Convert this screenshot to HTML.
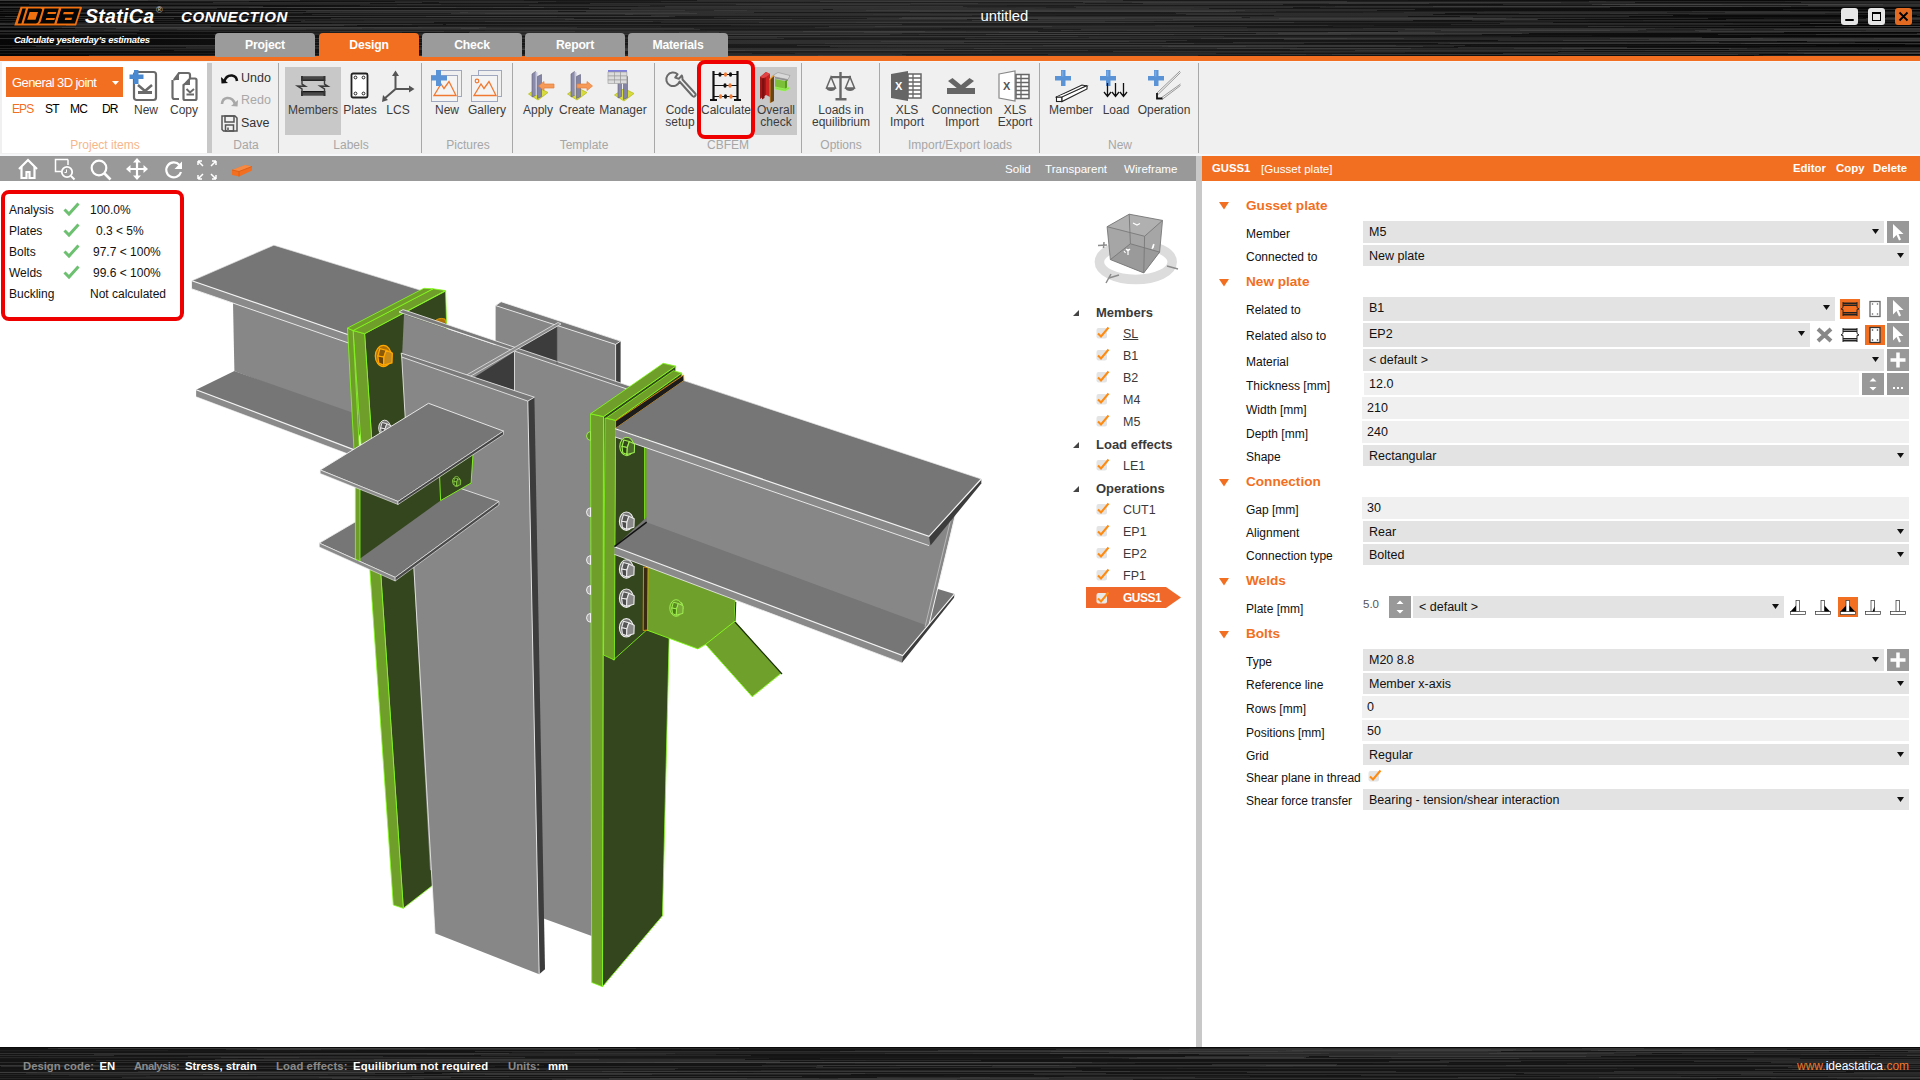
<!DOCTYPE html><html><head><meta charset="utf-8"><style>
*{margin:0;padding:0;box-sizing:border-box}
html,body{width:1920px;height:1080px;overflow:hidden;background:#fff;font-family:"Liberation Sans",sans-serif}
.t{position:absolute;white-space:nowrap;line-height:1}
.a{position:absolute}
svg.a{overflow:visible}
</style></head><body>
<div class="a" style="left:0;top:0;width:1920px;height:56px;background:linear-gradient(90deg,#070707 0%,#141414 20%,#1e1e1e 45%,#1c1c1c 60%,#101010 80%,#060606 100%)"></div>
<svg class="a" style="left:0;top:0" width="1920" height="56"><path d="M1056 15.5h161M1448 42.5h179M1471 45.5h345M601 55.5h365M1165 24.5h449M1115 6.5h663M518 35.5h569M332 23.5h363M1250 36.5h161M1373 21.5h215M1830 33.5h275M1144 22.5h260M812 0.5h596M1381 2.5h599M-125 2.5h578M1701 12.5h638M436 32.5h491M677 34.5h662M524 7.5h237M1752 52.5h382M545 4.5h481M264 15.5h247M1785 1.5h312M1351 52.5h607M435 37.5h135M921 32.5h228M12 47.5h423M1071 23.5h662M1005 44.5h439M3 10.5h544M1394 17.5h171M1782 20.5h608M1070 44.5h370M1211 4.5h150M1399 6.5h676M914 34.5h493M-74 22.5h263M1327 41.5h450M1051 17.5h503M923 50.5h103M1758 39.5h96M586 54.5h408M723 43.5h135M876 7.5h419M992 54.5h340M1462 27.5h122M264 46.5h623M1561 51.5h543M1408 47.5h569M1721 52.5h370M188 18.5h504M1502 17.5h361M1098 37.5h99M1218 27.5h310M69 18.5h298M1031 34.5h282M263 38.5h363M1150 23.5h446M920 39.5h354M-53 3.5h344M248 24.5h126M1352 27.5h322M942 1.5h651M519 28.5h442M381 30.5h321M898 41.5h640M1540 14.5h591M403 25.5h689M229 14.5h265M1034 8.5h306M467 22.5h613M1250 11.5h409M594 28.5h129M536 37.5h474M1288 5.5h685M940 35.5h652M1214 2.5h247M-185 6.5h131M1301 25.5h423M763 12.5h397M1204 24.5h536M1764 18.5h441M730 9.5h158M804 1.5h83" stroke="rgb(25,25,25)" stroke-opacity="0.6"/><path d="M1127 30.5h121M1763 55.5h322M423 1.5h557M300 32.5h102M418 26.5h243M838 47.5h445M600 50.5h559M1237 11.5h483M1517 28.5h676M374 28.5h568M1631 11.5h291M953 18.5h632M59 12.5h630M1110 17.5h402M485 30.5h588M69 49.5h157M1866 30.5h610M1815 26.5h339M1645 50.5h155M928 36.5h583M104 30.5h560M1537 11.5h292M1643 20.5h192M1689 14.5h482M348 49.5h196M-7 27.5h575M360 5.5h647M12 22.5h248M750 25.5h582M330 55.5h565M1075 1.5h531M1691 42.5h164M873 14.5h389M1620 5.5h453M656 37.5h184M664 20.5h516M655 15.5h326M506 10.5h152M1905 40.5h277M22 0.5h502M1504 21.5h649M-109 31.5h186M790 52.5h550M303 20.5h603M-196 23.5h201M1006 21.5h148M1176 52.5h229M1783 9.5h169M177 29.5h129M330 13.5h600M1751 37.5h261M-156 34.5h669M-91 53.5h419M1333 26.5h291M158 1.5h91M1024 9.5h167M1304 50.5h645M1363 12.5h513M1140 47.5h157M1905 44.5h498M364 20.5h205M1016 7.5h178M-83 13.5h386M731 25.5h643M850 37.5h280M-64 23.5h80M480 13.5h255M408 27.5h477M1175 12.5h674M1647 31.5h214M249 53.5h196M857 20.5h318M1754 55.5h312M871 10.5h184M-101 9.5h185M50 12.5h215M707 31.5h259M358 28.5h515M276 40.5h361M638 6.5h688M1213 34.5h231M704 37.5h271M1484 11.5h390M1760 47.5h337" stroke="rgb(40,40,40)" stroke-opacity="0.5"/><path d="M795 53.5h421M1155 25.5h173M1718 34.5h433M529 5.5h121M29 4.5h412M520 55.5h303M714 17.5h527M-157 20.5h462M1074 6.5h668M-125 26.5h336M721 32.5h669M1048 54.5h258M-172 3.5h542M1520 30.5h118M308 10.5h250M649 55.5h549M1503 4.5h219M1849 26.5h313M825 43.5h479M1043 28.5h612M1610 13.5h230M160 16.5h108M186 47.5h480M174 50.5h123M856 22.5h697M1729 49.5h149M683 36.5h541M1089 37.5h613M919 34.5h432M910 11.5h366M485 21.5h620M-30 45.5h696M1626 4.5h351M1405 29.5h329M275 25.5h82M214 34.5h210M312 14.5h321M866 10.5h379M1788 53.5h303M1290 49.5h294M287 7.5h680M1472 20.5h412M-149 38.5h679M-18 16.5h368M1162 46.5h292M485 13.5h545M1692 11.5h98M-120 27.5h370M1726 19.5h355M-170 0.5h470M-121 27.5h698M1514 48.5h233M679 32.5h401M641 53.5h111M1878 26.5h129M106 10.5h641M631 9.5h192M202 19.5h590M911 3.5h174M1451 24.5h349M395 1.5h161M1404 12.5h263M1843 19.5h601M1874 38.5h334M1869 18.5h265M75 28.5h287M1363 28.5h594M972 18.5h153M-184 24.5h596M308 33.5h594M1329 3.5h612M651 15.5h321M997 11.5h232M1519 13.5h306M769 55.5h91M661 22.5h464M1320 7.5h290M481 37.5h296M432 54.5h470M815 27.5h432M1335 6.5h456M113 27.5h309M1011 16.5h397M528 46.5h146M493 7.5h553M1477 13.5h161M514 34.5h585M90 16.5h467M397 4.5h513M1859 53.5h143M661 1.5h445M-45 7.5h122" stroke="rgb(55,55,55)" stroke-opacity="0.5"/><path d="M797 45.5h599M1061 30.5h650M-65 7.5h609M1083 2.5h552M1113 51.5h445M899 18.5h607M62 27.5h424M1081 29.5h565M1498 40.5h466M-5 33.5h142M1917 15.5h481M1588 26.5h680M427 49.5h517M451 13.5h246M1441 30.5h169M820 1.5h527M1355 50.5h675M-138 0.5h286M-35 31.5h479M586 11.5h650M974 48.5h437M1503 53.5h633M972 20.5h441M1256 33.5h266M1433 6.5h490M470 31.5h568M1592 4.5h518M803 31.5h122M1176 13.5h269M1460 16.5h169M33 8.5h184M-73 11.5h94M881 41.5h285M446 24.5h456M1808 5.5h194M1450 43.5h330M1500 23.5h352M1328 32.5h456M1558 52.5h462M1217 48.5h514M1804 53.5h355M1774 29.5h412M1810 23.5h640M1695 30.5h689M867 18.5h118M213 2.5h209M1458 47.5h169M714 10.5h663M569 50.5h423M461 28.5h233M665 6.5h298M829 26.5h223M1699 31.5h675M460 12.5h294M1801 2.5h277M1866 18.5h509M986 34.5h188M-155 30.5h294M116 28.5h363M1278 33.5h251M417 49.5h227M1602 4.5h281M1332 54.5h406M54 29.5h646M36 46.5h217M902 17.5h340M625 14.5h390M1279 18.5h429M830 46.5h416M469 32.5h250M589 8.5h620M999 32.5h436M426 16.5h249M256 22.5h178" stroke="rgb(85,85,85)" stroke-opacity="0.35"/><path d="M439 2.5h99M1844 28.5h163M-124 6.5h387M725 43.5h469M875 26.5h319M1040 34.5h442M1741 43.5h98M1223 38.5h181M1563 40.5h436M1043 45.5h422M727 19.5h240M1143 3.5h286M1745 43.5h457M478 38.5h306M583 48.5h449M1186 14.5h247M864 32.5h276M565 19.5h198M-31 50.5h191M590 3.5h388M598 50.5h147M1589 1.5h498M1284 39.5h664M1610 38.5h442M165 12.5h303M759 22.5h535M66 25.5h278M5 16.5h664M1438 43.5h550M1233 42.5h486M29 7.5h427M1173 19.5h364M89 55.5h377M1274 15.5h399M1807 41.5h149M1707 29.5h526M-90 38.5h531M1797 50.5h569M330 31.5h245M1649 39.5h359M1201 38.5h562M48 13.5h85M1398 31.5h653M301 21.5h352M833 9.5h582M1877 24.5h623M1917 33.5h218M-138 18.5h312M1885 13.5h572M306 11.5h252M1562 48.5h422M965 38.5h382M398 35.5h162M1886 17.5h366M1781 4.5h85M1877 9.5h232M1816 34.5h381M664 36.5h414M655 50.5h433M1879 49.5h660M1076 7.5h217M1168 46.5h255M-175 23.5h311M277 24.5h166M1671 38.5h347M717 40.5h470M736 4.5h547M1696 40.5h592M688 41.5h441M331 18.5h243M700 34.5h190M1038 19.5h500M486 34.5h334M697 0.5h426M32 45.5h423M1725 12.5h423M1250 17.5h223M249 7.5h148M273 42.5h691M-23 48.5h690M1280 54.5h479M1132 2.5h429M-131 0.5h401M-175 24.5h412M279 10.5h406M818 55.5h88" stroke="rgb(70,70,70)" stroke-opacity="0.45"/></svg>
<div class="a" style="left:0px;top:56px;width:1920px;height:5px;background:#f26f21;"></div>
<svg class="a" style="left:0px;top:0px;" width="90" height="30" viewBox="0 0 90 30">
<path d="M20.6 6.7 H81.2 Q82.2 6.9 81.8 8.2 L76.3 25 Q76 25.6 75.3 25.6 H14.3 Z" fill="#f07010"/>
<g fill="#050505">
<path d="M22.4 8.5 H25.9 L21.4 23.4 H17.7 Z"/>
<path d="M28.2 8.5 H40.3 Q42.6 8.5 42 10.5 L38.5 21.6 Q38 23.4 36 23.4 H23.6 Z"/>
<path d="M44.5 8.5 H58.8 L54.3 23.4 H38.7 Q40.3 23.4 40.8 21.6 L44 10.5 Q44.4 8.9 44.5 8.5 Z"/>
<path d="M61 8.5 H79.7 L75 23.4 H56.5 Z"/>
</g>
<g fill="#f07010">
<path d="M29.7 11.9 H38 L35.5 19.8 H27.2 Z"/>
<path d="M47.9 11.9 H56.3 L55.6 14 H47.3 Z"/>
<path d="M46.3 18 H55 L54.3 20 H45.6 Z"/>
<path d="M59.6 8.5 H61.2 L56.6 23.4 H55 Z"/>
<path d="M63.8 11.9 H73.8 L73.1 14.2 H63.1 Z"/>
<path d="M65.4 17.7 H72.1 L71.4 20 H64.7 Z"/>
</g>
</svg>
<div class="t" style="left:85px;top:6.99px;font-size:19.5px;color:#fff;font-weight:bold;font-style:italic;letter-spacing:0.3px">StatiCa</div>
<div class="t" style="left:156px;top:6.38px;font-size:9px;color:#ccc;font-weight:normal;">®</div>
<div class="t" style="left:181px;top:8.80px;font-size:15px;color:#fff;font-weight:bold;font-style:italic;letter-spacing:0.6px">CONNECTION</div>
<div class="t" style="left:14px;top:34.96px;font-size:9.5px;color:#fff;font-weight:bold;font-style:italic;letter-spacing:-0.25px">Calculate yesterday’s estimates</div>
<div class="t" style="left:980.5px;top:9.47px;font-size:14.8px;color:#fff;font-weight:normal;">untitled</div>
<div class="a" style="left:1841px;top:8px;width:17px;height:17px;background:#e6e6e6;border-radius:3px"></div>
<div class="a" style="left:1845px;top:19px;width:9px;height:2px;background:#000;border-radius:1px"></div>
<div class="a" style="left:1868px;top:8px;width:17px;height:17px;background:#e6e6e6;border-radius:3px"></div>
<div class="a" style="left:1872px;top:12px;width:9px;height:9px;border:1.5px solid #000;border-top-width:2.5px"></div>
<div class="a" style="left:1895px;top:8px;width:17px;height:17px;background:#e36a21;border-radius:3px"></div>
<svg class="a" style="left:1899px;top:12px;" width="9" height="9" viewBox="0 0 9 9"><path d="M0.5 0.5 L8.5 8.5 M8.5 0.5 L0.5 8.5" stroke="#000" stroke-width="1.8"/></svg>
<div class="a" style="left:215px;top:33px;width:100px;height:24px;background:#9b9b9b;border-radius:4px 4px 0 0"></div>
<div class="t" style="left:215px;top:38.97px;width:100px;text-align:center;font-size:12.2px;font-weight:bold;color:#fff;letter-spacing:-0.2px">Project</div>
<div class="a" style="left:319px;top:33px;width:100px;height:24px;background:#f26f21;border-radius:4px 4px 0 0"></div>
<div class="t" style="left:319px;top:38.97px;width:100px;text-align:center;font-size:12.2px;font-weight:bold;color:#fff;letter-spacing:-0.2px">Design</div>
<div class="a" style="left:422px;top:33px;width:100px;height:24px;background:#9b9b9b;border-radius:4px 4px 0 0"></div>
<div class="t" style="left:422px;top:38.97px;width:100px;text-align:center;font-size:12.2px;font-weight:bold;color:#fff;letter-spacing:-0.2px">Check</div>
<div class="a" style="left:525px;top:33px;width:100px;height:24px;background:#9b9b9b;border-radius:4px 4px 0 0"></div>
<div class="t" style="left:525px;top:38.97px;width:100px;text-align:center;font-size:12.2px;font-weight:bold;color:#fff;letter-spacing:-0.2px">Report</div>
<div class="a" style="left:628px;top:33px;width:100px;height:24px;background:#9b9b9b;border-radius:4px 4px 0 0"></div>
<div class="t" style="left:628px;top:38.97px;width:100px;text-align:center;font-size:12.2px;font-weight:bold;color:#fff;letter-spacing:-0.2px">Materials</div>
<div class="a" style="left:0px;top:61px;width:1920px;height:94px;background:#f0f0f0;"></div>
<div class="a" style="left:0px;top:61px;width:1920px;height:1px;background:#f4f6f8;"></div>
<div class="a" style="left:2px;top:62px;width:205px;height:91px;background:#ffffff;"></div>
<div class="a" style="left:207px;top:63px;width:5px;height:90px;background:#c8c8c8;"></div>
<div class="a" style="left:278px;top:63px;width:1px;height:90px;background:#a8a8a8;"></div>
<div class="a" style="left:421px;top:63px;width:1px;height:90px;background:#a8a8a8;"></div>
<div class="a" style="left:512px;top:63px;width:1px;height:90px;background:#a8a8a8;"></div>
<div class="a" style="left:654px;top:63px;width:1px;height:90px;background:#a8a8a8;"></div>
<div class="a" style="left:801px;top:63px;width:1px;height:90px;background:#a8a8a8;"></div>
<div class="a" style="left:879px;top:63px;width:1px;height:90px;background:#a8a8a8;"></div>
<div class="a" style="left:1039px;top:63px;width:1px;height:90px;background:#a8a8a8;"></div>
<div class="a" style="left:1198px;top:63px;width:1px;height:90px;background:#a8a8a8;"></div>
<div class="a" style="left:285px;top:67px;width:56px;height:68px;background:#c8c8c8;"></div>
<div class="a" style="left:755px;top:67px;width:42px;height:68px;background:#c8c8c8;"></div>
<div class="a" style="left:6px;top:67px;width:117px;height:30px;background:#f26f21;"></div>
<div class="t" style="left:12px;top:76.00px;font-size:13px;color:#fff;font-weight:normal;letter-spacing:-0.6px">General 3D joint</div>
<svg class="a" style="left:112px;top:81px;" width="7" height="4" viewBox="0 0 7 4"><path d="M0 0 H7 L3.5 4 Z" fill="#fff"/></svg>
<div class="t" style="left:12px;top:103.34px;font-size:12px;color:#f26f21;font-weight:normal;letter-spacing:-0.9px">EPS</div>
<div class="t" style="left:45px;top:103.34px;font-size:12px;color:#000;font-weight:normal;letter-spacing:-0.8px">ST</div>
<div class="t" style="left:70px;top:103.34px;font-size:12px;color:#000;font-weight:normal;letter-spacing:-0.8px">MC</div>
<div class="t" style="left:102px;top:103.34px;font-size:12px;color:#000;font-weight:normal;letter-spacing:-0.8px">DR</div>
<div class="t" style="left:86px;width:120px;text-align:center;top:104.14px;font-size:12px;color:#3c3c3c;letter-spacing:0px">New</div>
<div class="t" style="left:124px;width:120px;text-align:center;top:104.14px;font-size:12px;color:#3c3c3c;letter-spacing:0px">Copy</div>
<div class="t" style="left:45px;width:120px;text-align:center;top:139.44px;font-size:12px;color:#f6b68c;letter-spacing:0px">Project items</div>
<svg class="a" style="left:129px;top:69px;" width="32" height="34" viewBox="0 0 32 34">
<rect x="5" y="3" width="22" height="28" rx="2.5" fill="none" stroke="#6a6a6a" stroke-width="2.2"/>
<path d="M9 16 L16 22 L23 16" fill="none" stroke="#6a6a6a" stroke-width="2.5"/>
<rect x="9" y="22" width="14" height="3" fill="#6a6a6a"/>
<rect x="5" y="1" width="4.5" height="14" fill="#4a89d0"/><rect x="0.5" y="5.5" width="14" height="4.5" fill="#4a89d0"/>
</svg>
<svg class="a" style="left:171px;top:70px;" width="28" height="32" viewBox="0 0 28 32">
<path d="M3 10 L8 3 H17 Q19 3 19 5 V8" fill="none" stroke="#6a6a6a" stroke-width="2.2"/>
<path d="M1.5 10 V27 Q1.5 29 3.5 29 H8" fill="none" stroke="#6a6a6a" stroke-width="2.2"/>
<path d="M2 10 L8 3 V10 Z" fill="#6a6a6a"/>
<path d="M14 14 L19 8.5 H24 Q25.5 8.5 25.5 10 V28.5 Q25.5 30 24 30 H14 Q12.5 30 12.5 28.5 V15 Z" fill="#fff" stroke="#6a6a6a" stroke-width="2.2"/>
<path d="M13 15 L19 8.5 V15 Z" fill="#6a6a6a"/>
<path d="M15.5 19 L19 22.5 L23 19" fill="none" stroke="#6a6a6a" stroke-width="2"/><rect x="15.5" y="23.5" width="7.5" height="2" fill="#6a6a6a"/>
</svg>
<svg class="a" style="left:221px;top:73px;" width="17" height="12" viewBox="0 0 17 12"><path d="M3 9 Q5 2 11 2.5 Q15.5 3 16 8" fill="none" stroke="#111" stroke-width="2.6"/><path d="M0 4 L0.5 10.5 L7 10 Z" fill="#111"/></svg>
<div class="t" style="left:241px;top:72.42px;font-size:12.5px;color:#333;font-weight:normal;">Undo</div>
<svg class="a" style="left:221px;top:96px;" width="17" height="11" viewBox="0 0 17 11"><path d="M14 8 Q12 1.5 6 2 Q1.5 2.5 1 8" fill="none" stroke="#a8a8a8" stroke-width="2.6"/><path d="M17 4 L16.5 10.5 L10 10 Z" fill="#a8a8a8"/></svg>
<div class="t" style="left:241px;top:94.42px;font-size:12.5px;color:#a8a8a8;font-weight:normal;">Redo</div>
<svg class="a" style="left:221px;top:115px;" width="17" height="17" viewBox="0 0 17 17"><path d="M1 1 H14 L16 3 V16 H2.5 L1 14.5 Z" fill="none" stroke="#555" stroke-width="1.5"/><rect x="4" y="1" width="9" height="6" fill="none" stroke="#555" stroke-width="1.5"/><rect x="4.5" y="10" width="8" height="6" fill="none" stroke="#555" stroke-width="1.5"/><rect x="6" y="12.5" width="2" height="3.5" fill="#777"/></svg>
<div class="t" style="left:241px;top:116.92px;font-size:12.5px;color:#333;font-weight:normal;">Save</div>
<div class="t" style="left:186px;width:120px;text-align:center;top:139.44px;font-size:12px;color:#a6a6a6;letter-spacing:0px">Data</div>
<svg class="a" style="left:296px;top:75px;" width="34" height="23" viewBox="0 0 34 23">
<rect x="5" y="1.2" width="24" height="3.6" fill="#484848"/><rect x="5" y="4.6" width="24" height="1.2" fill="#000"/>
<rect x="5" y="17.1" width="24" height="3.6" fill="#484848"/><rect x="5" y="16.1" width="24" height="1.2" fill="#000"/>
<rect x="5" y="1" width="2" height="5" fill="#333"/><rect x="27.5" y="1" width="2" height="5" fill="#333"/>
<rect x="5" y="16" width="2" height="5" fill="#333"/><rect x="27.5" y="16" width="2" height="5" fill="#333"/>
<path d="M6 5.5 V9 L9.5 11.3 L1.5 11 L6 13.8 V16.5" fill="none" stroke="#3a3a3a" stroke-width="1.4"/>
<path d="M28.5 5.5 V9 L32 11.3 L24 11 L28.5 13.8 V16.5" fill="none" stroke="#3a3a3a" stroke-width="1.4"/>
</svg>
<div class="t" style="left:253px;width:120px;text-align:center;top:104.14px;font-size:12px;color:#3c3c3c;letter-spacing:0px">Members</div>
<svg class="a" style="left:350px;top:72px;" width="20" height="28" viewBox="0 0 20 28"><rect x="1.5" y="1.5" width="16" height="24" rx="1.5" fill="#fff" stroke="#222" stroke-width="1.8"/><g fill="none" stroke="#222" stroke-width="1"><circle cx="5.5" cy="5.5" r="1.4"/><circle cx="13.5" cy="5.5" r="1.4"/><circle cx="5.5" cy="21.5" r="1.4"/><circle cx="13.5" cy="21.5" r="1.4"/></g></svg>
<div class="t" style="left:300px;width:120px;text-align:center;top:104.14px;font-size:12px;color:#3c3c3c;letter-spacing:0px">Plates</div>
<svg class="a" style="left:381px;top:70px;" width="34" height="33" viewBox="0 0 34 33"><g stroke="#555" stroke-width="2" fill="none"><path d="M14.5 5 V19 L3 29"/><path d="M14.5 19 H29"/></g><path d="M14.5 0.5 L11 6 H18 Z M33.5 19 L28 15.5 V22.5 Z M1 32 L2 25 L7 30 Z" fill="#555"/></svg>
<div class="t" style="left:338px;width:120px;text-align:center;top:104.14px;font-size:12px;color:#3c3c3c;letter-spacing:0px">LCS</div>
<div class="t" style="left:291px;width:120px;text-align:center;top:139.44px;font-size:12px;color:#a6a6a6;letter-spacing:0px">Labels</div>
<svg class="a" style="left:431px;top:70px;" width="32" height="33" viewBox="0 0 32 33">
<rect x="7.5" y="0.5" width="23" height="26" fill="none" stroke="#a0a8c0" stroke-width="1"/>
<rect x="0.5" y="5.5" width="26" height="26" fill="#f4f4f4" stroke="#a0a8c0" stroke-width="1"/>
<path d="M3 25.5 L10 14 L13 18.5 L18 11.5 L25 25.5 Z" fill="none" stroke="#f07830" stroke-width="1.3"/>

<g fill="#5a93d6"><rect x="5" y="0" width="5" height="16"/><rect x="0" y="5.5" width="16" height="5"/></g>
</svg>
<div class="t" style="left:387px;width:120px;text-align:center;top:104.14px;font-size:12px;color:#3c3c3c;letter-spacing:0px">New</div>
<svg class="a" style="left:471px;top:70px;" width="32" height="33" viewBox="0 0 32 33">
<rect x="7.5" y="0.5" width="23" height="26" fill="none" stroke="#a0a8c0" stroke-width="1"/>
<rect x="0.5" y="5.5" width="26" height="26" fill="#f4f4f4" stroke="#a0a8c0" stroke-width="1"/>
<path d="M3 25.5 L10 14 L13 18.5 L18 11.5 L25 25.5 Z" fill="none" stroke="#f07830" stroke-width="1.3"/>
<circle cx="6" cy="11" r="1.8" fill="none" stroke="#f07830" stroke-width="1.2"/>

</svg>
<div class="t" style="left:427px;width:120px;text-align:center;top:104.14px;font-size:12px;color:#3c3c3c;letter-spacing:0px">Gallery</div>
<div class="t" style="left:408px;width:120px;text-align:center;top:139.44px;font-size:12px;color:#a6a6a6;letter-spacing:0px">Pictures</div>
<svg class="a" style="left:526px;top:70px;" width="32" height="32" viewBox="0 0 32 32"><g transform="translate(2,0)">
<path d="M0.5 24 L10 17.5 L20 22.5 L10 30 Z" fill="#d8dc3c" stroke="#b8bc20" stroke-width="0.8"/>
<path d="M4 4 L7.5 1.5 V25.5 L4 27 Z" fill="#8a8aaa" stroke="#60607a" stroke-width="0.6"/>
<path d="M7.5 1.5 L9.5 2.5 V24.5 L7.5 25.5 Z" fill="#c8c8dc"/>
<path d="M9.5 6.5 L13.5 4.5 V26.5 L9.5 28.5 Z" fill="#8484a4" stroke="#60607a" stroke-width="0.6"/>
</g><path d="M12.5 16 L18 11.5 V14 H28 V18 H18 V20.5 Z" fill="#f59a58" stroke="#e8803a" stroke-width="0.7"/></svg>
<div class="t" style="left:478px;width:120px;text-align:center;top:104.14px;font-size:12px;color:#3c3c3c;letter-spacing:0px">Apply</div>
<svg class="a" style="left:565px;top:70px;" width="32" height="32" viewBox="0 0 32 32"><g transform="translate(2,0)">
<path d="M0.5 24 L10 17.5 L20 22.5 L10 30 Z" fill="#d8dc3c" stroke="#b8bc20" stroke-width="0.8"/>
<path d="M4 4 L7.5 1.5 V25.5 L4 27 Z" fill="#8a8aaa" stroke="#60607a" stroke-width="0.6"/>
<path d="M7.5 1.5 L9.5 2.5 V24.5 L7.5 25.5 Z" fill="#c8c8dc"/>
<path d="M9.5 6.5 L13.5 4.5 V26.5 L9.5 28.5 Z" fill="#8484a4" stroke="#60607a" stroke-width="0.6"/>
</g><path d="M27.5 16 L22 11.5 V14 H12 V18 H22 V20.5 Z" fill="#f59a58" stroke="#e8803a" stroke-width="0.7"/></svg>
<div class="t" style="left:517px;width:120px;text-align:center;top:104.14px;font-size:12px;color:#3c3c3c;letter-spacing:0px">Create</div>
<svg class="a" style="left:606px;top:69px;" width="32" height="33" viewBox="0 0 32 33">
<g transform="translate(8,2)"><path d="M0.5 24 L10 17.5 L20 22.5 L10 30 Z" fill="#d8dc3c" stroke="#b8bc20" stroke-width="0.8"/>
<path d="M4 6 L7.5 4 V25.5 L4 27 Z" fill="#8a8aaa" stroke="#60607a" stroke-width="0.6"/>
<path d="M9.5 7.5 L13.5 5.5 V26.5 L9.5 28.5 Z" fill="#8484a4" stroke="#60607a" stroke-width="0.6"/></g>
<rect x="2" y="1" width="19" height="2" fill="#8080e0"/>
<g fill="#dcdcdc" stroke="#9a9a9a" stroke-width="0.6"><rect x="2" y="3" width="6.3" height="4"/><rect x="8.3" y="3" width="6.3" height="4"/><rect x="14.6" y="3" width="6.3" height="4"/>
<rect x="2" y="7" width="6.3" height="4"/><rect x="8.3" y="7" width="6.3" height="4"/><rect x="14.6" y="7" width="6.3" height="4"/>
<rect x="2" y="11" width="6.3" height="3.5"/><rect x="8.3" y="11" width="6.3" height="3.5"/><rect x="14.6" y="11" width="6.3" height="3.5"/></g>
</svg>
<div class="t" style="left:563px;width:120px;text-align:center;top:104.14px;font-size:12px;color:#3c3c3c;letter-spacing:0px">Manager</div>
<div class="t" style="left:524px;width:120px;text-align:center;top:139.44px;font-size:12px;color:#a6a6a6;letter-spacing:0px">Template</div>
<svg class="a" style="left:664px;top:69px;" width="33" height="33" viewBox="0 0 33 33"><path d="M13.6 5.2 A6.8 6.8 0 1 0 15.5 12.5 L28 26.5 Q29.5 28.5 31 27 Q32.5 25.5 30.8 24 L18.5 10.5 A6.8 6.8 0 0 0 17.8 6.5 L14.8 9.8 L11.2 8.6 Z" fill="none" stroke="#6a6a6a" stroke-width="2" stroke-linejoin="round"/></svg>
<div class="t" style="left:620px;width:120px;text-align:center;top:104.14px;font-size:12px;color:#3c3c3c;letter-spacing:0px">Code</div>
<div class="t" style="left:620px;width:120px;text-align:center;top:116.14px;font-size:12px;color:#3c3c3c;letter-spacing:0px">setup</div>
<svg class="a" style="left:710px;top:70px;" width="32" height="32" viewBox="0 0 32 32">
<g stroke="#111" stroke-width="2.2"><path d="M3.5 1 V30 M27.5 1 V30"/></g>
<g stroke="#111" stroke-width="1.2"><path d="M3.5 4.5 H27.5 M3.5 15.5 H27.5 M3.5 26.5 H27.5"/></g>
<g stroke="#111" stroke-width="2"><path d="M0 30 H7 M24 30 H31"/></g>
<g fill="#111"><ellipse cx="10" cy="4.5" rx="1.6" ry="2.2"/><ellipse cx="20.5" cy="4.5" rx="1.6" ry="2.2"/><ellipse cx="15" cy="15.5" rx="1.6" ry="2.2"/><ellipse cx="15.5" cy="26.5" rx="1.6" ry="2.2"/></g>
<g fill="#f07830"><ellipse cx="15.5" cy="4.5" rx="1.6" ry="2.2"/><ellipse cx="20" cy="15.5" rx="1.6" ry="2.2"/><ellipse cx="10.5" cy="26.5" rx="1.6" ry="2.2"/><ellipse cx="21" cy="26.5" rx="1.6" ry="2.2"/></g>
</svg>
<div class="t" style="left:666px;width:120px;text-align:center;top:104.14px;font-size:12px;color:#3c3c3c;letter-spacing:0px">Calculate</div>
<svg class="a" style="left:759px;top:70px;" width="32" height="33" viewBox="0 0 32 33">
<path d="M1 7 L7 2 V25 L1 29 Z" fill="#a01818"/><path d="M7 2 L11 4 V27 L7 25 Z" fill="#cc2222"/><path d="M1 7 L7 2 L11 4 L5 8.5 Z" fill="#e04444"/>
<path d="M3 9 L5.5 7.5 V28 L3 29.5 Z" fill="#801010"/>
<path d="M11 9 L15 5.5 V31 L11 33 Z" fill="#6a4414"/><path d="M10.5 9.5 L14.5 5.5 L16 6.5" fill="none" stroke="#f0a030" stroke-width="1.2"/><path d="M11 33 V9" stroke="#f0a030" stroke-width="0.8"/>
<path d="M14.5 5 L19 2.5 L31 5.5 L29 9.5 L16 7 Z" fill="#d8d8d8" stroke="#888" stroke-width="0.5"/><path d="M16 7 L29 9.5 V11 L16 8.5 Z" fill="#909090"/>
<path d="M16 9 L26 11 L26 21 L16 19 Z" fill="#7cc03a"/><path d="M26 11 L28 10 V19.5 L26 21 Z" fill="#5a9a20"/>
<path d="M16 19 L26 21 L31 18.5 L30 17 L26 19 L16 17 Z" fill="#8ae04a" stroke="#a0ff60" stroke-width="0.6"/>
</svg>
<div class="t" style="left:716px;width:120px;text-align:center;top:104.14px;font-size:12px;color:#3c3c3c;letter-spacing:0px">Overall</div>
<div class="t" style="left:716px;width:120px;text-align:center;top:116.14px;font-size:12px;color:#3c3c3c;letter-spacing:0px">check</div>
<div class="t" style="left:668px;width:120px;text-align:center;top:139.44px;font-size:12px;color:#a6a6a6;letter-spacing:0px">CBFEM</div>
<div class="a" style="left:697px;top:60px;width:58px;height:79px;border:4px solid #ee0000;border-radius:8px"></div>
<svg class="a" style="left:825px;top:71px;" width="32" height="31" viewBox="0 0 32 31">
<g fill="#666"><rect x="14.3" y="1" width="2.4" height="27"/><rect x="10.5" y="27" width="11" height="2.5"/><rect x="6" y="5" width="20" height="2.2"/></g>
<g fill="none" stroke="#666" stroke-width="1.5"><path d="M6 6 L1.5 17 H10.5 Z M25 6 L20.5 17 H29.5 Z"/></g>
<g fill="#666"><path d="M1 17 H11 Q10 20 6 20 Q2 20 1 17 Z M20 17 H30 Q29 20 25 20 Q21 20 20 17 Z"/></g>
</svg>
<div class="t" style="left:781px;width:120px;text-align:center;top:104.14px;font-size:12px;color:#3c3c3c;letter-spacing:0px">Loads in</div>
<div class="t" style="left:781px;width:120px;text-align:center;top:116.14px;font-size:12px;color:#3c3c3c;letter-spacing:0px">equilibrium</div>
<div class="t" style="left:781px;width:120px;text-align:center;top:139.44px;font-size:12px;color:#a6a6a6;letter-spacing:0px">Options</div>
<svg class="a" style="left:891px;top:71px;" width="32" height="31" viewBox="0 0 32 31">
<path d="M0 3 L17 0 V30 L0 27 Z" fill="#666"/>
<rect x="17" y="3" width="13" height="24" fill="#fff" stroke="#666" stroke-width="1.5"/>
<g stroke="#666" stroke-width="1.3"><path d="M17 7 H30 M17 11 H30 M17 15 H30 M17 19 H30 M17 23 H30 M22 3 V27"/></g>
<text x="4" y="19" font-family="Liberation Sans" font-size="11" font-weight="bold" fill="#fff">X</text>
</svg>
<div class="t" style="left:847px;width:120px;text-align:center;top:104.14px;font-size:12px;color:#3c3c3c;letter-spacing:0px">XLS</div>
<div class="t" style="left:847px;width:120px;text-align:center;top:116.14px;font-size:12px;color:#3c3c3c;letter-spacing:0px">Import</div>
<svg class="a" style="left:947px;top:77px;" width="30" height="18" viewBox="0 0 30 18"><path d="M1 4 L5.5 1 L14 8 L22.5 1 L27 4 L17 12 H11 Z" fill="#666"/><rect x="0" y="11" width="28" height="6" fill="#666"/></svg>
<div class="t" style="left:902px;width:120px;text-align:center;top:104.14px;font-size:12px;color:#3c3c3c;letter-spacing:0px">Connection</div>
<div class="t" style="left:902px;width:120px;text-align:center;top:116.14px;font-size:12px;color:#3c3c3c;letter-spacing:0px">Import</div>
<svg class="a" style="left:998px;top:70px;" width="33" height="33" viewBox="0 0 33 33">
<path d="M1 4 L17 1 V31 L1 28 Z" fill="#fff" stroke="#888" stroke-width="1.2"/>
<rect x="18" y="4.5" width="13" height="24" fill="#fff" stroke="#666" stroke-width="1.5"/>
<g stroke="#666" stroke-width="1.3"><path d="M18 8.5 H31 M18 12.5 H31 M18 16.5 H31 M18 20.5 H31 M18 24.5 H31 M23 4.5 V28.5"/></g>
<text x="5" y="20" font-family="Liberation Sans" font-size="11" font-weight="bold" fill="#555">X</text>
</svg>
<div class="t" style="left:955px;width:120px;text-align:center;top:104.14px;font-size:12px;color:#3c3c3c;letter-spacing:0px">XLS</div>
<div class="t" style="left:955px;width:120px;text-align:center;top:116.14px;font-size:12px;color:#3c3c3c;letter-spacing:0px">Export</div>
<div class="t" style="left:900px;width:120px;text-align:center;top:139.44px;font-size:12px;color:#a6a6a6;letter-spacing:0px">Import/Export loads</div>
<svg class="a" style="left:1054px;top:69px;" width="34" height="34" viewBox="0 0 34 34"><g fill="#5a93d6"><rect x="7" y="1" width="4.5" height="16"/><rect x="1" y="7" width="16" height="4.5"/></g><g fill="#8ab8ec" opacity="0.6"><rect x="7.5" y="1.5" width="2" height="6"/></g><g fill="#fff" stroke="#222" stroke-width="1.1"><path d="M2.5 28 L28 16 L33 17 L8 29.5 Z"/><rect x="2.5" y="28" width="5.5" height="4.5"/><path d="M8 28 V32.5 L33 20 V17"/><path d="M2.5 28 L8 28 L33 16.5"/></g></svg>
<div class="t" style="left:1011px;width:120px;text-align:center;top:104.14px;font-size:12px;color:#3c3c3c;letter-spacing:0px">Member</div>
<svg class="a" style="left:1099px;top:69px;" width="34" height="34" viewBox="0 0 34 34"><g fill="#5a93d6"><rect x="7" y="1" width="4.5" height="16"/><rect x="1" y="7" width="16" height="4.5"/></g><g fill="#8ab8ec" opacity="0.6"><rect x="7.5" y="1.5" width="2" height="6"/></g><g stroke="#111" stroke-width="1.3" fill="none"><path d="M8.5 14 V27 M5 23 L8.5 27.5 L12 23 M16.5 14 V27 M13 23 L16.5 27.5 L20 23 M24.5 14 V27 M21 23 L24.5 27.5 L28 23"/></g></svg>
<div class="t" style="left:1056px;width:120px;text-align:center;top:104.14px;font-size:12px;color:#3c3c3c;letter-spacing:0px">Load</div>
<svg class="a" style="left:1147px;top:69px;" width="34" height="34" viewBox="0 0 34 34"><g fill="#5a93d6"><rect x="7" y="1" width="4.5" height="16"/><rect x="1" y="7" width="16" height="4.5"/></g><g fill="#8ab8ec" opacity="0.6"><rect x="7.5" y="1.5" width="2" height="6"/></g><g stroke="#999" stroke-width="1" fill="none"><path d="M10 24 L33 2 M11 25.5 L33.5 3.5 M14 29 L33.5 15 M15 30.5 L33.5 16.5"/></g><path d="M10 24 V29.5 H15.5" fill="none" stroke="#111" stroke-width="1.8"/></svg>
<div class="t" style="left:1104px;width:120px;text-align:center;top:104.14px;font-size:12px;color:#3c3c3c;letter-spacing:0px">Operation</div>
<div class="t" style="left:1060px;width:120px;text-align:center;top:139.44px;font-size:12px;color:#a6a6a6;letter-spacing:0px">New</div>
<div class="a" style="left:0px;top:153.5px;width:1920px;height:2.5px;background:#f6f7f8;"></div>
<div class="a" style="left:0px;top:156px;width:1196px;height:25px;background:#999999;"></div>
<div class="a" style="left:1196px;top:155.5px;width:6px;height:891.5px;background:#c8c8c8;"></div>
<svg class="a" style="left:17px;top:158px;" width="22" height="22" viewBox="0 0 22 22"><path d="M2 11 L11 2 L20 11" fill="none" stroke="#fff" stroke-width="2.2"/><path d="M4.5 9 V20 H9.5 V14 H12.5 V20 H17.5 V9" fill="none" stroke="#fff" stroke-width="2.2"/></svg>
<svg class="a" style="left:54px;top:157.5px;" width="23" height="24" viewBox="0 0 23 24"><path d="M14 1.5 H1.5 V13.5 H7" fill="none" stroke="#fff" stroke-width="1.5"/><path d="M14 1.5 V7" stroke="#fff" stroke-width="1.5"/><circle cx="13" cy="14" r="5.2" fill="none" stroke="#fff" stroke-width="1.8"/><path d="M17 18 L20.5 21.5" stroke="#fff" stroke-width="2"/><path d="M12.5 11.5 V14.5 H10.5" fill="none" stroke="#fff" stroke-width="1"/></svg>
<svg class="a" style="left:90px;top:159px;" width="23" height="23" viewBox="0 0 23 23"><circle cx="9" cy="9" r="7.3" fill="none" stroke="#fff" stroke-width="2.2"/><path d="M14.5 14.5 L20.5 20.5" stroke="#fff" stroke-width="2.6"/></svg>
<svg class="a" style="left:126px;top:157.5px;" width="23" height="23" viewBox="0 0 23 23"><path d="M11 3 V19 M3 11 H19" stroke="#fff" stroke-width="2.2"/><path d="M11 0 L7 4.5 H15 Z M11 22 L7 17.5 H15 Z M0 11 L4.5 7 V15 Z M22 11 L17.5 7 V15 Z" fill="#fff"/></svg>
<svg class="a" style="left:164px;top:160px;" width="20" height="20" viewBox="0 0 20 20"><path d="M15.5 5 A7.5 7.5 0 1 0 17 12" fill="none" stroke="#fff" stroke-width="2.2"/><path d="M18 1.5 V9 H10.5 Z" fill="#fff"/></svg>
<svg class="a" style="left:196px;top:158.5px;" width="22" height="22" viewBox="0 0 22 22"><g stroke="#fff" stroke-width="1.5" fill="none"><path d="M2 2 L7 7 M2 2 V6 M2 2 H6"/><path d="M20 2 L15 7 M20 2 V6 M20 2 H16"/><path d="M2 20 L7 15 M2 20 V16 M2 20 H6"/><path d="M20 20 L15 15 M20 20 V16 M20 20 H16"/></g></svg>
<svg class="a" style="left:231px;top:163.5px;" width="22" height="15" viewBox="0 0 22 15"><path d="M1 6 L14 1 L21 2.5 L21 6.5 L8 12.5 L1 11 Z" fill="#f26f21"/><path d="M1 6 L14 1 L21 2.5 L8 7.5 Z" fill="#f58a45"/><path d="M1 6 L8 7.5 L21 2.5" fill="none" stroke="#d85a10" stroke-width="0.8"/><path d="M8 7.5 V12.5" stroke="#d85a10" stroke-width="0.8"/></svg>
<div class="t" style="left:1005px;top:162.68px;font-size:11.6px;color:#fff;font-weight:normal;">Solid</div>
<div class="t" style="left:1045px;top:162.68px;font-size:11.6px;color:#fff;font-weight:normal;">Transparent</div>
<div class="t" style="left:1124px;top:162.68px;font-size:11.6px;color:#fff;font-weight:normal;">Wireframe</div>
<div class="a" style="left:1px;top:190px;width:183px;height:131px;border:4px solid #ee0000;border-radius:8px;background:#fff"></div>
<div class="t" style="left:9px;top:203.84px;font-size:12px;color:#111;font-weight:normal;">Analysis</div>
<div class="t" style="left:90px;top:203.84px;font-size:12px;color:#111;font-weight:normal;">100.0%</div>
<svg class="a" style="left:63px;top:202px;" width="17" height="14" viewBox="0 0 17 14"><path d="M1.5 7.5 L6 12 L15.5 1.5" fill="none" stroke="#6cc070" stroke-width="3"/></svg>
<div class="t" style="left:9px;top:224.84px;font-size:12px;color:#111;font-weight:normal;">Plates</div>
<div class="t" style="left:96px;top:224.84px;font-size:12px;color:#111;font-weight:normal;">0.3 &lt; 5%</div>
<svg class="a" style="left:63px;top:223px;" width="17" height="14" viewBox="0 0 17 14"><path d="M1.5 7.5 L6 12 L15.5 1.5" fill="none" stroke="#6cc070" stroke-width="3"/></svg>
<div class="t" style="left:9px;top:245.84px;font-size:12px;color:#111;font-weight:normal;">Bolts</div>
<div class="t" style="left:93px;top:245.84px;font-size:12px;color:#111;font-weight:normal;">97.7 &lt; 100%</div>
<svg class="a" style="left:63px;top:244px;" width="17" height="14" viewBox="0 0 17 14"><path d="M1.5 7.5 L6 12 L15.5 1.5" fill="none" stroke="#6cc070" stroke-width="3"/></svg>
<div class="t" style="left:9px;top:266.84px;font-size:12px;color:#111;font-weight:normal;">Welds</div>
<div class="t" style="left:93px;top:266.84px;font-size:12px;color:#111;font-weight:normal;">99.6 &lt; 100%</div>
<svg class="a" style="left:63px;top:265px;" width="17" height="14" viewBox="0 0 17 14"><path d="M1.5 7.5 L6 12 L15.5 1.5" fill="none" stroke="#6cc070" stroke-width="3"/></svg>
<div class="t" style="left:9px;top:287.84px;font-size:12px;color:#111;font-weight:normal;">Buckling</div>
<div class="t" style="left:90px;top:287.84px;font-size:12px;color:#111;font-weight:normal;">Not calculated</div>
<svg class="a" style="left:1085px;top:200px;" width="110" height="90" viewBox="0 0 110 90">
<ellipse cx="50.8" cy="62" rx="36.4" ry="17.5" fill="none" stroke="#dcdcdc" stroke-width="9.5"/>
<path d="M22.1 26.7 L44.2 14.2 L77.5 20.4 L74.6 52.1 L58.75 72.9 L25.4 59.6 Z" fill="#a6a6a6"/>
<path d="M22.1 26.7 L44.2 14.2 L77.5 20.4 L59.6 36.25 Z" fill="#b0b0b0"/>
<path d="M25.4 59.6 L45.4 43.75 L74.6 52.1 L58.75 72.9 Z" fill="#9a9a9a"/>
<g fill="none" stroke="#787878" stroke-width="0.9">
<path d="M22.1 26.7 L44.2 14.2 L77.5 20.4 L59.6 36.25 Z"/>
<path d="M25.4 59.6 L45.4 43.75 L74.6 52.1 L58.75 72.9 Z"/>
<path d="M22.1 26.7 L25.4 59.6 M44.2 14.2 L45.4 43.75 M77.5 20.4 L74.6 52.1 M59.6 36.25 L58.75 72.9"/>
</g>
<g fill="none" stroke="#fff" stroke-width="1.2"><path d="M48 23 L52 25 L55 23.5"/><path d="M69 44 L68 48 M68.5 44.5 L67 49"/><path d="M39 51 L40.5 53 M43 49 L43 55 M41 49 L43 51 L45 49"/></g>
<g fill="none" stroke="#8c8c8c" stroke-width="1.5"><path d="M13 45.5 L22 45 M19 42 L18.5 48"/><path d="M82 66 L93 69"/><path d="M21 83 L26 74 M24 78 L34 75"/></g>
</svg>
<svg class="a" style="left:1073px;top:309.5px;" width="7" height="7" viewBox="0 0 7 7"><path d="M6 0 V6 H0 Z" fill="#444"/></svg><div class="t" style="left:1096px;top:305.50px;font-size:13px;color:#3a3a3a;font-weight:bold;">Members</div>
<svg class="a" style="left:1096px;top:326.2px;" width="15" height="13" viewBox="0 0 15 13"><rect x="0.5" y="2" width="10.5" height="10.5" rx="2" fill="#e4e4e4"/><path d="M2 7.5 L5 10.5 L12.5 1.5" fill="none" stroke="#ff8a10" stroke-width="2"/></svg><div class="t" style="left:1123px;top:328.12px;font-size:12.5px;color:#3a3a3a;font-weight:normal;text-decoration:underline">SL</div>
<svg class="a" style="left:1096px;top:348.2px;" width="15" height="13" viewBox="0 0 15 13"><rect x="0.5" y="2" width="10.5" height="10.5" rx="2" fill="#e4e4e4"/><path d="M2 7.5 L5 10.5 L12.5 1.5" fill="none" stroke="#ff8a10" stroke-width="2"/></svg><div class="t" style="left:1123px;top:350.12px;font-size:12.5px;color:#3a3a3a;font-weight:normal;">B1</div>
<svg class="a" style="left:1096px;top:370.2px;" width="15" height="13" viewBox="0 0 15 13"><rect x="0.5" y="2" width="10.5" height="10.5" rx="2" fill="#e4e4e4"/><path d="M2 7.5 L5 10.5 L12.5 1.5" fill="none" stroke="#ff8a10" stroke-width="2"/></svg><div class="t" style="left:1123px;top:372.12px;font-size:12.5px;color:#3a3a3a;font-weight:normal;">B2</div>
<svg class="a" style="left:1096px;top:392.2px;" width="15" height="13" viewBox="0 0 15 13"><rect x="0.5" y="2" width="10.5" height="10.5" rx="2" fill="#e4e4e4"/><path d="M2 7.5 L5 10.5 L12.5 1.5" fill="none" stroke="#ff8a10" stroke-width="2"/></svg><div class="t" style="left:1123px;top:394.12px;font-size:12.5px;color:#3a3a3a;font-weight:normal;">M4</div>
<svg class="a" style="left:1096px;top:414.2px;" width="15" height="13" viewBox="0 0 15 13"><rect x="0.5" y="2" width="10.5" height="10.5" rx="2" fill="#e4e4e4"/><path d="M2 7.5 L5 10.5 L12.5 1.5" fill="none" stroke="#ff8a10" stroke-width="2"/></svg><div class="t" style="left:1123px;top:416.12px;font-size:12.5px;color:#3a3a3a;font-weight:normal;">M5</div>
<svg class="a" style="left:1073px;top:441.5px;" width="7" height="7" viewBox="0 0 7 7"><path d="M6 0 V6 H0 Z" fill="#444"/></svg><div class="t" style="left:1096px;top:437.50px;font-size:13px;color:#3a3a3a;font-weight:bold;">Load effects</div>
<svg class="a" style="left:1096px;top:458.0px;" width="15" height="13" viewBox="0 0 15 13"><rect x="0.5" y="2" width="10.5" height="10.5" rx="2" fill="#e4e4e4"/><path d="M2 7.5 L5 10.5 L12.5 1.5" fill="none" stroke="#ff8a10" stroke-width="2"/></svg><div class="t" style="left:1123px;top:459.92px;font-size:12.5px;color:#3a3a3a;font-weight:normal;">LE1</div>
<svg class="a" style="left:1073px;top:485.5px;" width="7" height="7" viewBox="0 0 7 7"><path d="M6 0 V6 H0 Z" fill="#444"/></svg><div class="t" style="left:1096px;top:481.50px;font-size:13px;color:#3a3a3a;font-weight:bold;">Operations</div>
<svg class="a" style="left:1096px;top:502.0px;" width="15" height="13" viewBox="0 0 15 13"><rect x="0.5" y="2" width="10.5" height="10.5" rx="2" fill="#e4e4e4"/><path d="M2 7.5 L5 10.5 L12.5 1.5" fill="none" stroke="#ff8a10" stroke-width="2"/></svg><div class="t" style="left:1123px;top:503.92px;font-size:12.5px;color:#3a3a3a;font-weight:normal;">CUT1</div>
<svg class="a" style="left:1096px;top:524.0px;" width="15" height="13" viewBox="0 0 15 13"><rect x="0.5" y="2" width="10.5" height="10.5" rx="2" fill="#e4e4e4"/><path d="M2 7.5 L5 10.5 L12.5 1.5" fill="none" stroke="#ff8a10" stroke-width="2"/></svg><div class="t" style="left:1123px;top:525.92px;font-size:12.5px;color:#3a3a3a;font-weight:normal;">EP1</div>
<svg class="a" style="left:1096px;top:546.0px;" width="15" height="13" viewBox="0 0 15 13"><rect x="0.5" y="2" width="10.5" height="10.5" rx="2" fill="#e4e4e4"/><path d="M2 7.5 L5 10.5 L12.5 1.5" fill="none" stroke="#ff8a10" stroke-width="2"/></svg><div class="t" style="left:1123px;top:547.92px;font-size:12.5px;color:#3a3a3a;font-weight:normal;">EP2</div>
<svg class="a" style="left:1096px;top:568.0px;" width="15" height="13" viewBox="0 0 15 13"><rect x="0.5" y="2" width="10.5" height="10.5" rx="2" fill="#e4e4e4"/><path d="M2 7.5 L5 10.5 L12.5 1.5" fill="none" stroke="#ff8a10" stroke-width="2"/></svg><div class="t" style="left:1123px;top:569.92px;font-size:12.5px;color:#3a3a3a;font-weight:normal;">FP1</div>
<svg class="a" style="left:1086px;top:587px;" width="95" height="21" viewBox="0 0 95 21"><path d="M0 0 H80 L95 10.5 L80 21 H0 Z" fill="#f0692a"/></svg>
<svg class="a" style="left:1096px;top:591px;" width="15" height="13" viewBox="0 0 15 13"><rect x="0.5" y="2" width="10.5" height="10.5" rx="2" fill="#e8e8e8"/><path d="M2 7.5 L5 10.5 L12.5 1.5" fill="none" stroke="#ff8a10" stroke-width="2"/></svg>
<div class="t" style="left:1123px;top:591.84px;font-size:12px;color:#fff;font-weight:bold;letter-spacing:-0.5px">GUSS1</div>
<svg class="a" style="left:0;top:0" width="1196" height="1047" viewBox="0 0 1196 1047"><polygon points="233,303 365,347 365,420 234.4,371.1" fill="#878787" /><polygon points="196.1,389.7 234.4,371.1 365,417 355,450.1" fill="#767676" /><polygon points="196.1,389.7 355,450.1 355,456.6 196.1,396.8" fill="#8a8a8a" /><polyline points="196.1,389.7 355,450.1" fill="none" stroke="#f2f2f2" stroke-width="1.2"/><polyline points="196.1,396.8 355,456.6" fill="none" stroke="#f2f2f2" stroke-width="0.6"/><polygon points="191.9,280.8 365,340.5 365,348.7 191.9,288.9" fill="#8a8a8a" /><polygon points="273.9,245.2 191.9,280.8 365,340.5 428,292.5" fill="#767676" /><polyline points="191.9,280.8 365,340.5" fill="none" stroke="#f2f2f2" stroke-width="1.2"/><polyline points="191.9,288.9 365,348.7" fill="none" stroke="#f2f2f2" stroke-width="0.9"/><polyline points="191.9,280.8 273.9,245.2 428,292.5" fill="none" stroke="#e0e0e0" stroke-width="0.7"/><polygon points="364.6,333.7 445.6,291.1 447,340 478,850 403.3,908.3" fill="#34461d" stroke="#84ff1a" stroke-width="0.8" stroke-linejoin="round" /><polygon points="353.1,330.5 364.6,333.7 403.3,908.3 393.3,905" fill="#6f9e2b" stroke="#84ff1a" stroke-width="0.8" stroke-linejoin="round" /><polygon points="353.1,330.5 433.1,288.8 445.6,290.6 364.6,333.7" fill="#6f9e2b" stroke="#84ff1a" stroke-width="0.8" stroke-linejoin="round" /><polygon points="347.5,328.1 353.1,330.5 361,480 355.5,478" fill="#6f9e2b" stroke="#84ff1a" stroke-width="0.8" stroke-linejoin="round" /><polygon points="347.5,328.1 423.9,288.3 433.1,288.8 353.1,330.5" fill="#6f9e2b" stroke="#84ff1a" stroke-width="0.8" stroke-linejoin="round" /><g transform="translate(384.5,356) scale(1.15)" stroke="#ffa800" stroke-width="1.1" stroke-linejoin="round"><ellipse cx="-1" cy="0" rx="7" ry="9.2" fill="#b07008"/><path d="M-4 -6.5 L1.5 -5 L-0.5 1 L-5.8 0 Z" fill="#8a5a08"/><path d="M-5.8 0 L-0.5 1 L-0.8 8 L-5 6.2 Z" fill="#6a4406"/><path d="M1.5 -5 L6.8 -2.5 L6.5 6 L-0.8 8 L-0.5 1 Z" fill="#c88a18"/></g><path d="M434 322 Q438 317 445 319 L446 323" fill="#b07008" stroke="#ffa800" stroke-width="0.8"/><g transform="translate(385.5,428) scale(0.85)" stroke="#ececec" stroke-width="1.1" stroke-linejoin="round"><ellipse cx="-1" cy="0" rx="7" ry="9.2" fill="#777"/><path d="M-4 -6.5 L1.5 -5 L-0.5 1 L-5.8 0 Z" fill="#555"/><path d="M-5.8 0 L-0.5 1 L-0.8 8 L-5 6.2 Z" fill="#4a4a4a"/><path d="M1.5 -5 L6.8 -2.5 L6.5 6 L-0.8 8 L-0.5 1 Z" fill="#8a8a8a"/></g><polygon points="495.6,305.6 615.6,344.4 615.6,700 495.6,660" fill="#878787" /><polygon points="615.6,344.4 620.6,341.1 620.6,700 615.6,700" fill="#3c3c3c" /><polygon points="495.6,305.6 501.1,301.7 620.6,341.1 615.6,344.4" fill="#7a7a7a" stroke="#f2f2f2" stroke-width="0.8" stroke-linejoin="round" /><polyline points="615.6,344.4 615.6,390" fill="none" stroke="#f2f2f2" stroke-width="0.8"/><polygon points="518,348.5 557,326.5 557,364" fill="#3c3c3c" /><polygon points="404,314.5 633.1,391.1 633,951 545,919 430,870 402,357" fill="#878787" /><polygon points="399,312 403,309.6 636.4,388.3 633.1,391.1 403.5,313.6" fill="#7a7a7a" stroke="#f2f2f2" stroke-width="0.8" stroke-linejoin="round" /><polyline points="514.4,352 514.4,392" fill="none" stroke="#f2f2f2" stroke-width="0.8"/><polyline points="557,327 557,364" fill="none" stroke="#555" stroke-width="0.6"/><polygon points="474,377.5 514,352 514,390" fill="#3c3c3c" /><polygon points="463,377 558,322.5 561,324 466,378.8" fill="#8c8c8c" stroke="#e6e6e6" stroke-width="0.8" stroke-linejoin="round" /><polygon points="401.7,357 527.8,401.1 539.2,974.2 435,933.3" fill="#878787" /><polygon points="527.8,401.1 534.4,397.2 545,969.2 539.2,974.2" fill="#3c3c3c" /><polygon points="401.2,353.1 534.4,397.2 527.8,401.1 401.7,357" fill="#7a7a7a" stroke="#f2f2f2" stroke-width="0.8" stroke-linejoin="round" /><polyline points="401.7,357 435,933.3" fill="none" stroke="#f2f2f2" stroke-width="0.8"/><polyline points="527.8,401.1 539.2,974.2" fill="none" stroke="#f2f2f2" stroke-width="0.9"/><polygon points="319.3,543.1 430,478 498.9,501.5 395.2,577.4" fill="#767676" stroke="#f2f2f2" stroke-width="0.8" stroke-linejoin="round" /><polygon points="319.3,543.1 395.2,577.4 395.2,581 319.3,547" fill="#8a8a8a" stroke="#f2f2f2" stroke-width="0.6" stroke-linejoin="round" /><polygon points="395.2,577.4 498.9,501.5 498.9,505 395.2,581" fill="#4a4a4a" stroke="#f2f2f2" stroke-width="0.6" stroke-linejoin="round" /><polygon points="357,486 466,417.5 470,470 440.6,500.6 357,560.7" fill="#34461d" /><polygon points="355.4,484 360,486 360,561 355.4,559" fill="#6f9e2b" stroke="#84ff1a" stroke-width="0.8" stroke-linejoin="round" /><polygon points="439.6,476.5 473,454.3 471.1,483 440.6,500.6" fill="#34461d" stroke="#84ff1a" stroke-width="0.9" stroke-linejoin="round" /><circle cx="456.3" cy="481.1" r="3.5" fill="none" stroke="#9be84a" stroke-width="1"/><circle cx="457.5" cy="481.5" r="2" fill="none" stroke="#9be84a" stroke-width="0.7"/><polygon points="428.5,403.3 503.5,431.1 398,501.5 320.2,470" fill="#767676" stroke="#f2f2f2" stroke-width="0.9" stroke-linejoin="round" /><polygon points="320.2,470 398,501.5 398,504.5 320.2,473.5" fill="#8a8a8a" stroke="#f2f2f2" stroke-width="0.6" stroke-linejoin="round" /><polygon points="398,501.5 503.5,431.1 503.5,434.5 398,504.5" fill="#444" stroke="#f2f2f2" stroke-width="0.6" stroke-linejoin="round" /><polygon points="603.5,416.6 675.7,366.1 662.5,915.8 602.5,986.7" fill="#34461d" stroke="#84ff1a" stroke-width="0.8" stroke-linejoin="round" /><polygon points="590.6,413.8 603.5,416.6 602.5,986.7 591.7,982.5" fill="#6f9e2b" stroke="#84ff1a" stroke-width="0.8" stroke-linejoin="round" /><polygon points="590.6,413.8 663.2,363.3 675.7,366.1 603.5,416.6" fill="#6f9e2b" stroke="#84ff1a" stroke-width="0.8" stroke-linejoin="round" /><path d="M590.5 507.70000000000005 Q586.5 508.20000000000005 586.5 512.2 Q586.5 516.2 590.5 516.7 Z" fill="#a8a8a8" stroke="#f0f0f0" stroke-width="1"/><path d="M590.5 555.5 Q586.5 556 586.5 560 Q586.5 564 590.5 564.5 Z" fill="#a8a8a8" stroke="#f0f0f0" stroke-width="1"/><path d="M590.5 585.5 Q586.5 586 586.5 590 Q586.5 594 590.5 594.5 Z" fill="#a8a8a8" stroke="#f0f0f0" stroke-width="1"/><path d="M590.5 613.3 Q586.5 613.8 586.5 617.8 Q586.5 621.8 590.5 622.3 Z" fill="#a8a8a8" stroke="#f0f0f0" stroke-width="1"/><path d="M590.5 431.5 Q586.5 432 586.5 436 Q586.5 440 590.5 440.5 Z" fill="#5a8a2a" stroke="#a0f050" stroke-width="0.9"/><polygon points="615.6,420.3 681.8,373 690,640 646.7,630 613.3,660" fill="#34461d" stroke="#84ff1a" stroke-width="0.8" stroke-linejoin="round" /><polygon points="605,418 615.6,420.3 614.4,660 603.5,655" fill="#6f9e2b" stroke="#84ff1a" stroke-width="0.8" stroke-linejoin="round" /><polygon points="606.3,418 673.4,370.7 681.8,373 615.6,420.3" fill="#6f9e2b" stroke="#84ff1a" stroke-width="0.8" stroke-linejoin="round" /><polygon points="615.6,421 683.6,375 683.9,380.6 615.6,428.3" fill="#1c1c1c" stroke="#ff9d00" stroke-width="0.8" stroke-linejoin="round" /><polygon points="644.5,437 649.5,440 649.5,522 644.5,524" fill="#6f9e2b" stroke="#84ff1a" stroke-width="0.7" stroke-linejoin="round" /><polyline points="650.5,440 650.5,522" fill="none" stroke="#111" stroke-width="1.0"/><polygon points="646.7,560 735.6,595 734.4,621.1 781.1,673.3 752.2,696.7 705.6,644.4 697.8,648.9 646.7,630" fill="#70a02c" stroke="#84ff1a" stroke-width="0.9" stroke-linejoin="round" /><polyline points="735,622 782,674" fill="none" stroke="#1a2a0a" stroke-width="1.2"/><polyline points="734.6,621.4 705.8,644.2" fill="none" stroke="#84ff1a" stroke-width="0.9"/><polyline points="735.8,602 735,621" fill="none" stroke="#1a2a0a" stroke-width="1.0"/><polygon points="643.5,567 648,567.5 647.5,630 643.2,630.5" fill="#3a2a10" stroke="#ff9d00" stroke-width="0.8" stroke-linejoin="round" /><g fill="none" stroke="#a8f060" stroke-width="0.9"><path d="M671 605 L676 601.5 L682 603 L683 609 L678 613 L672 611 Z"/><circle cx="675" cy="608" r="3"/></g><polygon points="614.4,546.7 660,505 954.5,593.9 902.7,655.5" fill="#767676" /><polygon points="646.7,440 956.3,510 928.6,626.3 646.7,522.2" fill="#878787" /><polyline points="956.3,511 928.6,626.3" fill="none" stroke="#f2f2f2" stroke-width="1.0"/><polyline points="952.5,512 925,627" fill="none" stroke="#d8d8d8" stroke-width="0.6"/><polygon points="614.4,546.7 902.7,655.5 901.8,662.9 614.4,554.4" fill="#8a8a8a" /><polygon points="902.7,655.5 954.5,593.9 954,597.8 901.8,662.9" fill="#3c3c3c" /><polyline points="614.4,546.7 902.7,655.5 954.5,593.9" fill="none" stroke="#f2f2f2" stroke-width="1.1"/><polyline points="614.4,554.4 901.8,662.9" fill="none" stroke="#f2f2f2" stroke-width="0.8"/><polyline points="614.4,546.7 646.7,522.2" fill="none" stroke="#111" stroke-width="1.5"/><polygon points="615.3,428.7 929,536.4 929,545.6 615.3,437" fill="#8a8a8a" /><polygon points="615.6,428.3 683.9,380.6 981.3,479 929,536.4" fill="#767676" /><polygon points="929,536.4 981.3,479 981.3,483.5 930.5,545.6" fill="#3c3c3c" /><polyline points="615.3,428.7 929,536.4 981.3,479" fill="none" stroke="#f2f2f2" stroke-width="1.2"/><polyline points="615.3,437 929,545.6" fill="none" stroke="#f2f2f2" stroke-width="0.9"/><polyline points="683.9,380.6 981.3,479" fill="none" stroke="#e6e6e6" stroke-width="0.7"/><g transform="translate(627.4,521.2) scale(1.0)" stroke="#ececec" stroke-width="1.1" stroke-linejoin="round"><ellipse cx="-1" cy="0" rx="7" ry="9.2" fill="#777"/><path d="M-4 -6.5 L1.5 -5 L-0.5 1 L-5.8 0 Z" fill="#555"/><path d="M-5.8 0 L-0.5 1 L-0.8 8 L-5 6.2 Z" fill="#4a4a4a"/><path d="M1.5 -5 L6.8 -2.5 L6.5 6 L-0.8 8 L-0.5 1 Z" fill="#8a8a8a"/></g><g transform="translate(627.4,569) scale(1.0)" stroke="#ececec" stroke-width="1.1" stroke-linejoin="round"><ellipse cx="-1" cy="0" rx="7" ry="9.2" fill="#777"/><path d="M-4 -6.5 L1.5 -5 L-0.5 1 L-5.8 0 Z" fill="#555"/><path d="M-5.8 0 L-0.5 1 L-0.8 8 L-5 6.2 Z" fill="#4a4a4a"/><path d="M1.5 -5 L6.8 -2.5 L6.5 6 L-0.8 8 L-0.5 1 Z" fill="#8a8a8a"/></g><g transform="translate(627.4,598.2) scale(1.0)" stroke="#ececec" stroke-width="1.1" stroke-linejoin="round"><ellipse cx="-1" cy="0" rx="7" ry="9.2" fill="#777"/><path d="M-4 -6.5 L1.5 -5 L-0.5 1 L-5.8 0 Z" fill="#555"/><path d="M-5.8 0 L-0.5 1 L-0.8 8 L-5 6.2 Z" fill="#4a4a4a"/><path d="M1.5 -5 L6.8 -2.5 L6.5 6 L-0.8 8 L-0.5 1 Z" fill="#8a8a8a"/></g><g transform="translate(627.4,627.8) scale(1.0)" stroke="#ececec" stroke-width="1.1" stroke-linejoin="round"><ellipse cx="-1" cy="0" rx="7" ry="9.2" fill="#777"/><path d="M-4 -6.5 L1.5 -5 L-0.5 1 L-5.8 0 Z" fill="#555"/><path d="M-5.8 0 L-0.5 1 L-0.8 8 L-5 6.2 Z" fill="#4a4a4a"/><path d="M1.5 -5 L6.8 -2.5 L6.5 6 L-0.8 8 L-0.5 1 Z" fill="#8a8a8a"/></g><g transform="translate(627.8,446.5) scale(1.0)" stroke="#a0f050" stroke-width="1.1" stroke-linejoin="round"><ellipse cx="-1" cy="0" rx="7" ry="9.2" fill="#3e5a22"/><path d="M-4 -6.5 L1.5 -5 L-0.5 1 L-5.8 0 Z" fill="#34461d"/><path d="M-5.8 0 L-0.5 1 L-0.8 8 L-5 6.2 Z" fill="#2e3e1a"/><path d="M1.5 -5 L6.8 -2.5 L6.5 6 L-0.8 8 L-0.5 1 Z" fill="#4a6a2a"/></g><g transform="translate(677,608) scale(0.9)" stroke="#a0f050" stroke-width="1.1" stroke-linejoin="round"><ellipse cx="-1" cy="0" rx="7" ry="9.2" fill="#6a9a2a"/><path d="M-4 -6.5 L1.5 -5 L-0.5 1 L-5.8 0 Z" fill="#5a8a22"/><path d="M-5.8 0 L-0.5 1 L-0.8 8 L-5 6.2 Z" fill="#4a7a1a"/><path d="M1.5 -5 L6.8 -2.5 L6.5 6 L-0.8 8 L-0.5 1 Z" fill="#7aaa3a"/></g><g transform="translate(457,481.5) scale(0.55)" stroke="#a0f050" stroke-width="1.1" stroke-linejoin="round"><ellipse cx="-1" cy="0" rx="7" ry="9.2" fill="#34461d"/><path d="M-4 -6.5 L1.5 -5 L-0.5 1 L-5.8 0 Z" fill="#34461d"/><path d="M-5.8 0 L-0.5 1 L-0.8 8 L-5 6.2 Z" fill="#2e3e1a"/><path d="M1.5 -5 L6.8 -2.5 L6.5 6 L-0.8 8 L-0.5 1 Z" fill="#4a6a2a"/></g></svg>
<div class="a" style="left:1202px;top:156px;width:718px;height:25px;background:#f26f21;"></div>
<div class="t" style="left:1212px;top:163.43px;font-size:11.3px;color:#fff;font-weight:bold;">GUSS1</div>
<div class="t" style="left:1261px;top:163.18px;font-size:11.6px;color:#fff;font-weight:normal;">[Gusset plate]</div>
<div class="t" style="left:1793px;top:163.35px;font-size:11.4px;color:#fff;font-weight:bold;">Editor</div>
<div class="t" style="left:1836px;top:163.35px;font-size:11.4px;color:#fff;font-weight:bold;">Copy</div>
<div class="t" style="left:1873px;top:163.35px;font-size:11.4px;color:#fff;font-weight:bold;">Delete</div>
<svg class="a" style="left:1219px;top:202.1px;" width="10" height="8" viewBox="0 0 10 8"><path d="M0 0 H10 L5 7.5 Z" fill="#f26f21"/></svg><div class="t" style="left:1246px;top:199.09px;font-size:13.6px;color:#f26f21;font-weight:bold;">Gusset plate</div>
<div class="t" style="left:1246px;top:227.64px;font-size:12px;color:#111;font-weight:normal;">Member</div>
<div class="a" style="left:1363px;top:221px;width:521px;height:22px;background:#e3e3e3;"></div><div class="t" style="left:1369px;top:225.62px;font-size:12.5px;color:#111;font-weight:normal;">M5</div><svg class="a" style="left:1872px;top:229px;" width="7" height="5" viewBox="0 0 7 5"><path d="M0 0 H7 L3.5 5 Z" fill="#111"/></svg>
<div class="a" style="left:1887px;top:221px;width:22px;height:22px;background:#999;"></div><svg class="a" style="left:1887px;top:221px;" width="22" height="22" viewBox="0 0 22 22"><path d="M6 3 V17.5 L9.5 14 L12 19.5 L14 18.5 L11.5 13 L16.5 13 Z" fill="#fff"/></svg>
<div class="t" style="left:1246px;top:250.64px;font-size:12px;color:#111;font-weight:normal;">Connected to</div>
<div class="a" style="left:1363px;top:245px;width:546px;height:21px;background:#e3e3e3;"></div><div class="t" style="left:1369px;top:249.62px;font-size:12.5px;color:#111;font-weight:normal;">New plate</div><svg class="a" style="left:1897px;top:253px;" width="7" height="5" viewBox="0 0 7 5"><path d="M0 0 H7 L3.5 5 Z" fill="#111"/></svg>
<svg class="a" style="left:1219px;top:278.5px;" width="10" height="8" viewBox="0 0 10 8"><path d="M0 0 H10 L5 7.5 Z" fill="#f26f21"/></svg><div class="t" style="left:1246px;top:275.49px;font-size:13.6px;color:#f26f21;font-weight:bold;">New plate</div>
<div class="t" style="left:1246px;top:303.64px;font-size:12px;color:#111;font-weight:normal;">Related to</div>
<div class="a" style="left:1363px;top:297px;width:472px;height:24px;background:#e3e3e3;"></div><div class="t" style="left:1369px;top:301.62px;font-size:12.5px;color:#111;font-weight:normal;">B1</div><svg class="a" style="left:1823px;top:305px;" width="7" height="5" viewBox="0 0 7 5"><path d="M0 0 H7 L3.5 5 Z" fill="#111"/></svg>
<div class="a" style="left:1840px;top:299px;width:20px;height:20px;background:#f26f21;"></div><svg class="a" style="left:1840px;top:299px;" width="20" height="20" viewBox="0 0 20 20"><g fill="#222"><rect x="3" y="3.5" width="14" height="1.5"/><rect x="3" y="5.5" width="14" height="1.5"/><rect x="3" y="13" width="14" height="1.5"/><rect x="3" y="15" width="14" height="1.5"/></g><path d="M3 3 V8.5 L1 10 L3 10.5 V17 M17 3 V8.5 L19 10 L17 10.5 V17" fill="none" stroke="#222" stroke-width="1"/></svg>
<svg class="a" style="left:1865px;top:299px;" width="20" height="20" viewBox="0 0 20 20"><rect x="5" y="2.5" width="10" height="15" fill="#fff" stroke="#666" stroke-width="1.3"/><g fill="#666"><circle cx="7.5" cy="5" r="0.8"/><circle cx="12.5" cy="5" r="0.8"/><circle cx="7.5" cy="15" r="0.8"/><circle cx="12.5" cy="15" r="0.8"/></g></svg>
<div class="a" style="left:1887px;top:297px;width:22px;height:24px;background:#999;"></div><svg class="a" style="left:1887px;top:297px;" width="22" height="24" viewBox="0 0 22 24"><path d="M6 3 V17.5 L9.5 14 L12 19.5 L14 18.5 L11.5 13 L16.5 13 Z" fill="#fff"/></svg>
<div class="t" style="left:1246px;top:329.64px;font-size:12px;color:#111;font-weight:normal;">Related also to</div>
<div class="a" style="left:1363px;top:323px;width:447px;height:24px;background:#e3e3e3;"></div><div class="t" style="left:1369px;top:327.62px;font-size:12.5px;color:#111;font-weight:normal;">EP2</div><svg class="a" style="left:1798px;top:331px;" width="7" height="5" viewBox="0 0 7 5"><path d="M0 0 H7 L3.5 5 Z" fill="#111"/></svg>
<svg class="a" style="left:1815px;top:326px;" width="19" height="18" viewBox="0 0 19 18"><path d="M3 3 L16 15 M16 3 L3 15" stroke="#888" stroke-width="4"/></svg>
<svg class="a" style="left:1840px;top:325px;" width="20" height="20" viewBox="0 0 20 20"><g fill="#222"><rect x="3" y="3.5" width="14" height="1.5"/><rect x="3" y="5.5" width="14" height="1.5"/><rect x="3" y="13" width="14" height="1.5"/><rect x="3" y="15" width="14" height="1.5"/></g><path d="M3 3 V8.5 L1 10 L3 10.5 V17 M17 3 V8.5 L19 10 L17 10.5 V17" fill="none" stroke="#222" stroke-width="1"/></svg>
<div class="a" style="left:1865px;top:325px;width:20px;height:20px;background:#f26f21;"></div><svg class="a" style="left:1865px;top:325px;" width="20" height="20" viewBox="0 0 20 20"><rect x="5" y="2.5" width="10" height="15" fill="#fff" stroke="#333" stroke-width="1.3"/><g fill="#333"><circle cx="7.5" cy="5" r="0.8"/><circle cx="12.5" cy="5" r="0.8"/><circle cx="7.5" cy="15" r="0.8"/><circle cx="12.5" cy="15" r="0.8"/></g></svg>
<div class="a" style="left:1887px;top:323px;width:22px;height:24px;background:#999;"></div><svg class="a" style="left:1887px;top:323px;" width="22" height="24" viewBox="0 0 22 24"><path d="M6 3 V17.5 L9.5 14 L12 19.5 L14 18.5 L11.5 13 L16.5 13 Z" fill="#fff"/></svg>
<div class="t" style="left:1246px;top:355.64px;font-size:12px;color:#111;font-weight:normal;">Material</div>
<div class="a" style="left:1363px;top:349px;width:521px;height:22px;background:#e3e3e3;"></div><div class="t" style="left:1369px;top:353.62px;font-size:12.5px;color:#111;font-weight:normal;">&lt; default &gt;</div><svg class="a" style="left:1872px;top:357px;" width="7" height="5" viewBox="0 0 7 5"><path d="M0 0 H7 L3.5 5 Z" fill="#111"/></svg>
<div class="a" style="left:1887px;top:349px;width:22px;height:22px;background:#999;"></div><svg class="a" style="left:1887px;top:349px;" width="22" height="22" viewBox="0 0 22 22"><path d="M11 3.5 V18.5 M3.5 11 H18.5" stroke="#fff" stroke-width="3.5"/></svg>
<div class="t" style="left:1246px;top:379.64px;font-size:12px;color:#111;font-weight:normal;">Thickness [mm]</div>
<div class="a" style="left:1364px;top:373px;width:495px;height:22px;background:#f0f0f0;"></div><div class="t" style="left:1369px;top:377.62px;font-size:12.5px;color:#111;font-weight:normal;">12.0</div>
<div class="a" style="left:1862px;top:373px;width:22px;height:22px;background:#999;"></div><svg class="a" style="left:1862px;top:373px;" width="22" height="22" viewBox="0 0 22 22"><path d="M7.5 8.5 L11 5 L14.5 8.5 Z M7.5 14 L11 17.5 L14.5 14 Z" fill="#fff"/></svg>
<div class="a" style="left:1887px;top:373px;width:22px;height:22px;background:#999;"></div><svg class="a" style="left:1887px;top:373px;" width="22" height="22" viewBox="0 0 22 22"><g fill="#fff"><rect x="6" y="14" width="2" height="2"/><rect x="10" y="14" width="2" height="2"/><rect x="14" y="14" width="2" height="2"/></g></svg>
<div class="t" style="left:1246px;top:403.64px;font-size:12px;color:#111;font-weight:normal;">Width [mm]</div>
<div class="a" style="left:1362px;top:397px;width:547px;height:22px;background:#f0f0f0;"></div><div class="t" style="left:1367px;top:401.62px;font-size:12.5px;color:#111;font-weight:normal;">210</div>
<div class="t" style="left:1246px;top:427.64px;font-size:12px;color:#111;font-weight:normal;">Depth [mm]</div>
<div class="a" style="left:1362px;top:421px;width:547px;height:22px;background:#f0f0f0;"></div><div class="t" style="left:1367px;top:425.62px;font-size:12.5px;color:#111;font-weight:normal;">240</div>
<div class="t" style="left:1246px;top:450.64px;font-size:12px;color:#111;font-weight:normal;">Shape</div>
<div class="a" style="left:1363px;top:445px;width:546px;height:21px;background:#e3e3e3;"></div><div class="t" style="left:1369px;top:449.62px;font-size:12.5px;color:#111;font-weight:normal;">Rectangular</div><svg class="a" style="left:1897px;top:453px;" width="7" height="5" viewBox="0 0 7 5"><path d="M0 0 H7 L3.5 5 Z" fill="#111"/></svg>
<svg class="a" style="left:1219px;top:478.5px;" width="10" height="8" viewBox="0 0 10 8"><path d="M0 0 H10 L5 7.5 Z" fill="#f26f21"/></svg><div class="t" style="left:1246px;top:475.49px;font-size:13.6px;color:#f26f21;font-weight:bold;">Connection</div>
<div class="t" style="left:1246px;top:503.64px;font-size:12px;color:#111;font-weight:normal;">Gap [mm]</div>
<div class="a" style="left:1362px;top:497px;width:547px;height:22px;background:#f0f0f0;"></div><div class="t" style="left:1367px;top:501.62px;font-size:12.5px;color:#111;font-weight:normal;">30</div>
<div class="t" style="left:1246px;top:526.64px;font-size:12px;color:#111;font-weight:normal;">Alignment</div>
<div class="a" style="left:1363px;top:521px;width:546px;height:21px;background:#e3e3e3;"></div><div class="t" style="left:1369px;top:525.62px;font-size:12.5px;color:#111;font-weight:normal;">Rear</div><svg class="a" style="left:1897px;top:529px;" width="7" height="5" viewBox="0 0 7 5"><path d="M0 0 H7 L3.5 5 Z" fill="#111"/></svg>
<div class="t" style="left:1246px;top:549.64px;font-size:12px;color:#111;font-weight:normal;">Connection type</div>
<div class="a" style="left:1363px;top:544px;width:546px;height:21px;background:#e3e3e3;"></div><div class="t" style="left:1369px;top:548.62px;font-size:12.5px;color:#111;font-weight:normal;">Bolted</div><svg class="a" style="left:1897px;top:552px;" width="7" height="5" viewBox="0 0 7 5"><path d="M0 0 H7 L3.5 5 Z" fill="#111"/></svg>
<svg class="a" style="left:1219px;top:577.5px;" width="10" height="8" viewBox="0 0 10 8"><path d="M0 0 H10 L5 7.5 Z" fill="#f26f21"/></svg><div class="t" style="left:1246px;top:574.49px;font-size:13.6px;color:#f26f21;font-weight:bold;">Welds</div>
<div class="t" style="left:1246px;top:602.64px;font-size:12px;color:#111;font-weight:normal;">Plate [mm]</div>
<div class="t" style="left:1363px;top:599.27px;font-size:11.5px;color:#555;font-weight:normal;">5.0</div>
<div class="a" style="left:1389px;top:596px;width:22px;height:22px;background:#999;"></div><svg class="a" style="left:1389px;top:596px;" width="22" height="22" viewBox="0 0 22 22"><path d="M7.5 8 L11 4.5 L14.5 8 Z M7.5 14 L11 17.5 L14.5 14 Z" fill="#fff"/></svg>
<div class="a" style="left:1413px;top:596px;width:371px;height:22px;background:#e3e3e3;"></div><div class="t" style="left:1419px;top:600.92px;font-size:12.5px;color:#111;font-weight:normal;">&lt; default &gt;</div><svg class="a" style="left:1772px;top:604px;" width="7" height="5" viewBox="0 0 7 5"><path d="M0 0 H7 L3.5 5 Z" fill="#111"/></svg>
<svg class="a" style="left:1790px;top:599px;" width="16" height="16" viewBox="0 0 16 16"><rect x="6" y="1.5" width="3.5" height="11" fill="#fff" stroke="#333" stroke-width="0.7"/><rect x="0.5" y="12.5" width="15" height="3" fill="#fff" stroke="#333" stroke-width="0.7"/><path d="M6 12.5 V6.5 L0.5 12.5 Z" fill="#000"/></svg>
<svg class="a" style="left:1815px;top:599px;" width="16" height="16" viewBox="0 0 16 16"><rect x="6" y="1.5" width="3.5" height="11" fill="#fff" stroke="#333" stroke-width="0.7"/><rect x="0.5" y="12.5" width="15" height="3" fill="#fff" stroke="#333" stroke-width="0.7"/><path d="M9.5 12.5 V6.5 L15 12.5 Z" fill="#000"/></svg>
<div class="a" style="left:1838px;top:597px;width:20px;height:20px;background:#f26f21;"></div><svg class="a" style="left:1840px;top:599px;" width="16" height="16" viewBox="0 0 16 16"><rect x="6" y="1.5" width="3.5" height="11" fill="#fff" stroke="#333" stroke-width="0.7"/><rect x="0.5" y="12.5" width="15" height="3" fill="#fff" stroke="#333" stroke-width="0.7"/><path d="M6 12.5 V6.5 L0.5 12.5 Z" fill="#000"/><path d="M9.5 12.5 V6.5 L15 12.5 Z" fill="#000"/></svg>
<svg class="a" style="left:1865px;top:599px;" width="16" height="16" viewBox="0 0 16 16"><rect x="6" y="1.5" width="3.5" height="11" fill="#fff" stroke="#333" stroke-width="0.7"/><rect x="0.5" y="12.5" width="15" height="3" fill="#fff" stroke="#333" stroke-width="0.7"/><path d="M9.5 12.5 V7.5 L7.5 12.5 Z" fill="#000"/></svg>
<svg class="a" style="left:1890px;top:599px;" width="16" height="16" viewBox="0 0 16 16"><rect x="6" y="1.5" width="3.5" height="11" fill="#fff" stroke="#333" stroke-width="0.7"/><rect x="0.5" y="12.5" width="15" height="3" fill="#fff" stroke="#333" stroke-width="0.7"/></svg>
<svg class="a" style="left:1219px;top:630.5px;" width="10" height="8" viewBox="0 0 10 8"><path d="M0 0 H10 L5 7.5 Z" fill="#f26f21"/></svg><div class="t" style="left:1246px;top:627.49px;font-size:13.6px;color:#f26f21;font-weight:bold;">Bolts</div>
<div class="t" style="left:1246px;top:655.64px;font-size:12px;color:#111;font-weight:normal;">Type</div>
<div class="a" style="left:1363px;top:649px;width:521px;height:22px;background:#e3e3e3;"></div><div class="t" style="left:1369px;top:653.62px;font-size:12.5px;color:#111;font-weight:normal;">M20 8.8</div><svg class="a" style="left:1872px;top:657px;" width="7" height="5" viewBox="0 0 7 5"><path d="M0 0 H7 L3.5 5 Z" fill="#111"/></svg>
<div class="a" style="left:1887px;top:649px;width:22px;height:22px;background:#999;"></div><svg class="a" style="left:1887px;top:649px;" width="22" height="22" viewBox="0 0 22 22"><path d="M11 3.5 V18.5 M3.5 11 H18.5" stroke="#fff" stroke-width="3.5"/></svg>
<div class="t" style="left:1246px;top:678.64px;font-size:12px;color:#111;font-weight:normal;">Reference line</div>
<div class="a" style="left:1363px;top:673px;width:546px;height:21px;background:#e3e3e3;"></div><div class="t" style="left:1369px;top:677.62px;font-size:12.5px;color:#111;font-weight:normal;">Member x-axis</div><svg class="a" style="left:1897px;top:681px;" width="7" height="5" viewBox="0 0 7 5"><path d="M0 0 H7 L3.5 5 Z" fill="#111"/></svg>
<div class="t" style="left:1246px;top:702.64px;font-size:12px;color:#111;font-weight:normal;">Rows [mm]</div>
<div class="a" style="left:1362px;top:696px;width:547px;height:22px;background:#f0f0f0;"></div><div class="t" style="left:1367px;top:700.62px;font-size:12.5px;color:#111;font-weight:normal;">0</div>
<div class="t" style="left:1246px;top:726.64px;font-size:12px;color:#111;font-weight:normal;">Positions [mm]</div>
<div class="a" style="left:1362px;top:720px;width:547px;height:21px;background:#f0f0f0;"></div><div class="t" style="left:1367px;top:724.62px;font-size:12.5px;color:#111;font-weight:normal;">50</div>
<div class="t" style="left:1246px;top:749.64px;font-size:12px;color:#111;font-weight:normal;">Grid</div>
<div class="a" style="left:1363px;top:744px;width:546px;height:21px;background:#e3e3e3;"></div><div class="t" style="left:1369px;top:748.62px;font-size:12.5px;color:#111;font-weight:normal;">Regular</div><svg class="a" style="left:1897px;top:752px;" width="7" height="5" viewBox="0 0 7 5"><path d="M0 0 H7 L3.5 5 Z" fill="#111"/></svg>
<div class="t" style="left:1246px;top:771.64px;font-size:12px;color:#111;font-weight:normal;">Shear plane in thread</div>
<svg class="a" style="left:1368px;top:769px;" width="15" height="13" viewBox="0 0 15 13"><rect x="0.5" y="2" width="10.5" height="10.5" rx="2" fill="#e4e4e4"/><path d="M2 7.5 L5 10.5 L12.5 1.5" fill="none" stroke="#ff8a10" stroke-width="2"/></svg>
<div class="t" style="left:1246px;top:794.64px;font-size:12px;color:#111;font-weight:normal;">Shear force transfer</div>
<div class="a" style="left:1363px;top:789px;width:546px;height:21px;background:#e3e3e3;"></div><div class="t" style="left:1369px;top:793.62px;font-size:12.5px;color:#111;font-weight:normal;">Bearing - tension/shear interaction</div><svg class="a" style="left:1897px;top:797px;" width="7" height="5" viewBox="0 0 7 5"><path d="M0 0 H7 L3.5 5 Z" fill="#111"/></svg>
<div class="a" style="left:0;top:1047px;width:1920px;height:33px;background:#141414"></div>
<svg class="a" style="left:0;top:1047px" width="1920" height="33"><path d="M1373 16.5h573M413 10.5h676M359 9.5h286M1327 10.5h130M39 9.5h590M-11 11.5h249M1828 23.5h401M1108 10.5h660M215 1.5h444M681 2.5h298M101 29.5h449M1829 30.5h680M29 24.5h431M490 9.5h623M1412 1.5h266M542 29.5h503M1450 27.5h345M102 19.5h377M1381 24.5h254M715 0.5h275M93 3.5h263M415 32.5h664M-199 22.5h372M-105 10.5h420M1814 2.5h201M944 28.5h382M1623 27.5h669M500 12.5h88M1341 10.5h139M929 10.5h681M240 3.5h81M812 20.5h371M-153 24.5h500M889 19.5h391M753 25.5h568M1258 22.5h600M620 20.5h148M1190 14.5h433M684 26.5h344M441 15.5h254M-70 4.5h381M1519 23.5h93M722 32.5h448M301 29.5h651" stroke="rgb(25,25,25)" stroke-opacity="0.6"/><path d="M1582 1.5h561M607 15.5h143M1350 0.5h333M138 24.5h574M1440 13.5h675M185 13.5h681M433 24.5h304M522 13.5h459M1500 2.5h287M1880 8.5h430M26 26.5h349M1877 30.5h183M473 7.5h193M1199 7.5h676M818 0.5h427M188 9.5h195M1374 7.5h625M896 18.5h163M761 23.5h321M1056 2.5h435M-66 25.5h103M485 27.5h366M762 18.5h229M226 2.5h95M146 29.5h229M1792 22.5h524M-5 31.5h372M-16 6.5h691M1260 19.5h633M385 15.5h385M1700 0.5h486M481 8.5h270M51 27.5h277M257 29.5h252M992 19.5h301M650 31.5h169M1398 6.5h254M885 6.5h444M1392 11.5h408M-37 10.5h336M993 18.5h454M1361 28.5h586M575 6.5h585M-93 27.5h341M973 6.5h348M74 22.5h132M1741 27.5h315M1213 0.5h156M1837 31.5h451" stroke="rgb(55,55,55)" stroke-opacity="0.5"/><path d="M1710 3.5h150M552 32.5h405M1329 9.5h272M1591 3.5h263M1869 10.5h361M816 20.5h260M381 22.5h294M1755 22.5h187M221 10.5h304M1266 18.5h526M543 0.5h670M1832 18.5h587M710 24.5h686M817 18.5h519M-115 18.5h165M1329 9.5h257M-123 8.5h237M1620 30.5h602M1034 27.5h482M1863 31.5h414M1207 4.5h96M1907 8.5h518M1630 5.5h394M1489 6.5h98M1598 3.5h666M1389 14.5h132M215 12.5h384M1185 9.5h124M1788 20.5h506M779 0.5h361M319 30.5h132M-48 6.5h557M1286 3.5h246M1137 10.5h169M20 0.5h585M822 15.5h627M609 31.5h138M525 15.5h567M1854 25.5h496M475 4.5h607M1694 14.5h461M655 15.5h417M1614 24.5h232M1860 3.5h200M877 30.5h113M257 2.5h341M114 21.5h564M1908 4.5h214" stroke="rgb(85,85,85)" stroke-opacity="0.35"/><path d="M69 28.5h81M1063 0.5h519M820 11.5h517M1026 24.5h86M1122 11.5h672M-122 18.5h666M384 21.5h516M1254 19.5h270M766 16.5h341M1177 21.5h440M264 11.5h505M1260 7.5h419M544 5.5h634M1771 31.5h169M899 30.5h615M1101 21.5h533M1682 6.5h418M1560 29.5h121M-55 3.5h223M1916 4.5h515M1585 7.5h216M1119 4.5h107M1189 1.5h133M1391 10.5h497M191 19.5h304M855 3.5h565M1567 16.5h356M1616 4.5h213M907 24.5h162M463 25.5h160M737 1.5h586M855 16.5h280M950 4.5h538M1064 29.5h186M546 23.5h234M1497 5.5h313M824 13.5h137M1490 19.5h574M197 21.5h99M-197 6.5h497M512 5.5h308M487 13.5h187M1162 31.5h555M427 7.5h289M1828 29.5h618M-37 29.5h506M1677 26.5h202" stroke="rgb(40,40,40)" stroke-opacity="0.5"/><path d="M553 19.5h270M1867 16.5h94M-162 25.5h568M1771 15.5h664M1050 6.5h564M-133 25.5h539M1129 11.5h390M566 32.5h567M1410 2.5h305M361 31.5h688M960 30.5h235M412 29.5h390M442 26.5h423M1051 4.5h227M1 19.5h418M1524 26.5h478M1063 10.5h241M332 31.5h92M1458 30.5h232M1247 25.5h526M838 31.5h662M358 14.5h422M626 15.5h367M96 13.5h467M414 15.5h657M602 24.5h528M1506 18.5h349M122 30.5h238M1700 30.5h293M1599 30.5h177M1109 5.5h645M1169 2.5h347M199 25.5h225M94 7.5h380M1292 3.5h574M58 1.5h681M290 1.5h346M938 3.5h575M1240 1.5h404M-35 18.5h134M450 26.5h656M-47 15.5h547M328 23.5h142M203 27.5h449M49 0.5h450M1249 8.5h387M840 4.5h661M48 1.5h377M1747 12.5h317M1212 17.5h125M800 0.5h133M374 12.5h371" stroke="rgb(70,70,70)" stroke-opacity="0.45"/></svg>
<div class="a" style="left:0px;top:1047px;width:1920px;height:1px;background:#0a0a0a;"></div>
<div class="t" style="left:23px;top:1060.83px;font-size:11.3px;color:#8a8a8a;font-weight:bold;letter-spacing:0px">Design code:</div>
<div class="t" style="left:99.5px;top:1060.83px;font-size:11.3px;color:#fff;font-weight:bold;letter-spacing:0px">EN</div>
<div class="t" style="left:134px;top:1060.83px;font-size:11.3px;color:#8a8a8a;font-weight:bold;letter-spacing:-0.55px">Analysis:</div>
<div class="t" style="left:185px;top:1060.83px;font-size:11.3px;color:#fff;font-weight:bold;letter-spacing:0px">Stress, strain</div>
<div class="t" style="left:276px;top:1060.83px;font-size:11.3px;color:#8a8a8a;font-weight:bold;letter-spacing:0.1px">Load effects:</div>
<div class="t" style="left:353px;top:1060.83px;font-size:11.3px;color:#fff;font-weight:bold;letter-spacing:0.17px">Equilibrium not required</div>
<div class="t" style="left:508px;top:1060.83px;font-size:11.3px;color:#8a8a8a;font-weight:bold;letter-spacing:0px">Units:</div>
<div class="t" style="left:548px;top:1060.83px;font-size:11.3px;color:#fff;font-weight:bold;letter-spacing:0px">mm</div>
<div class="t" style="left:1797px;top:1060.24px;font-size:12px;color:#fff;font-weight:normal;"><span style="color:#f07828">www.</span>ideastatica<span style="color:#f07828">.com</span></div>
</body></html>
